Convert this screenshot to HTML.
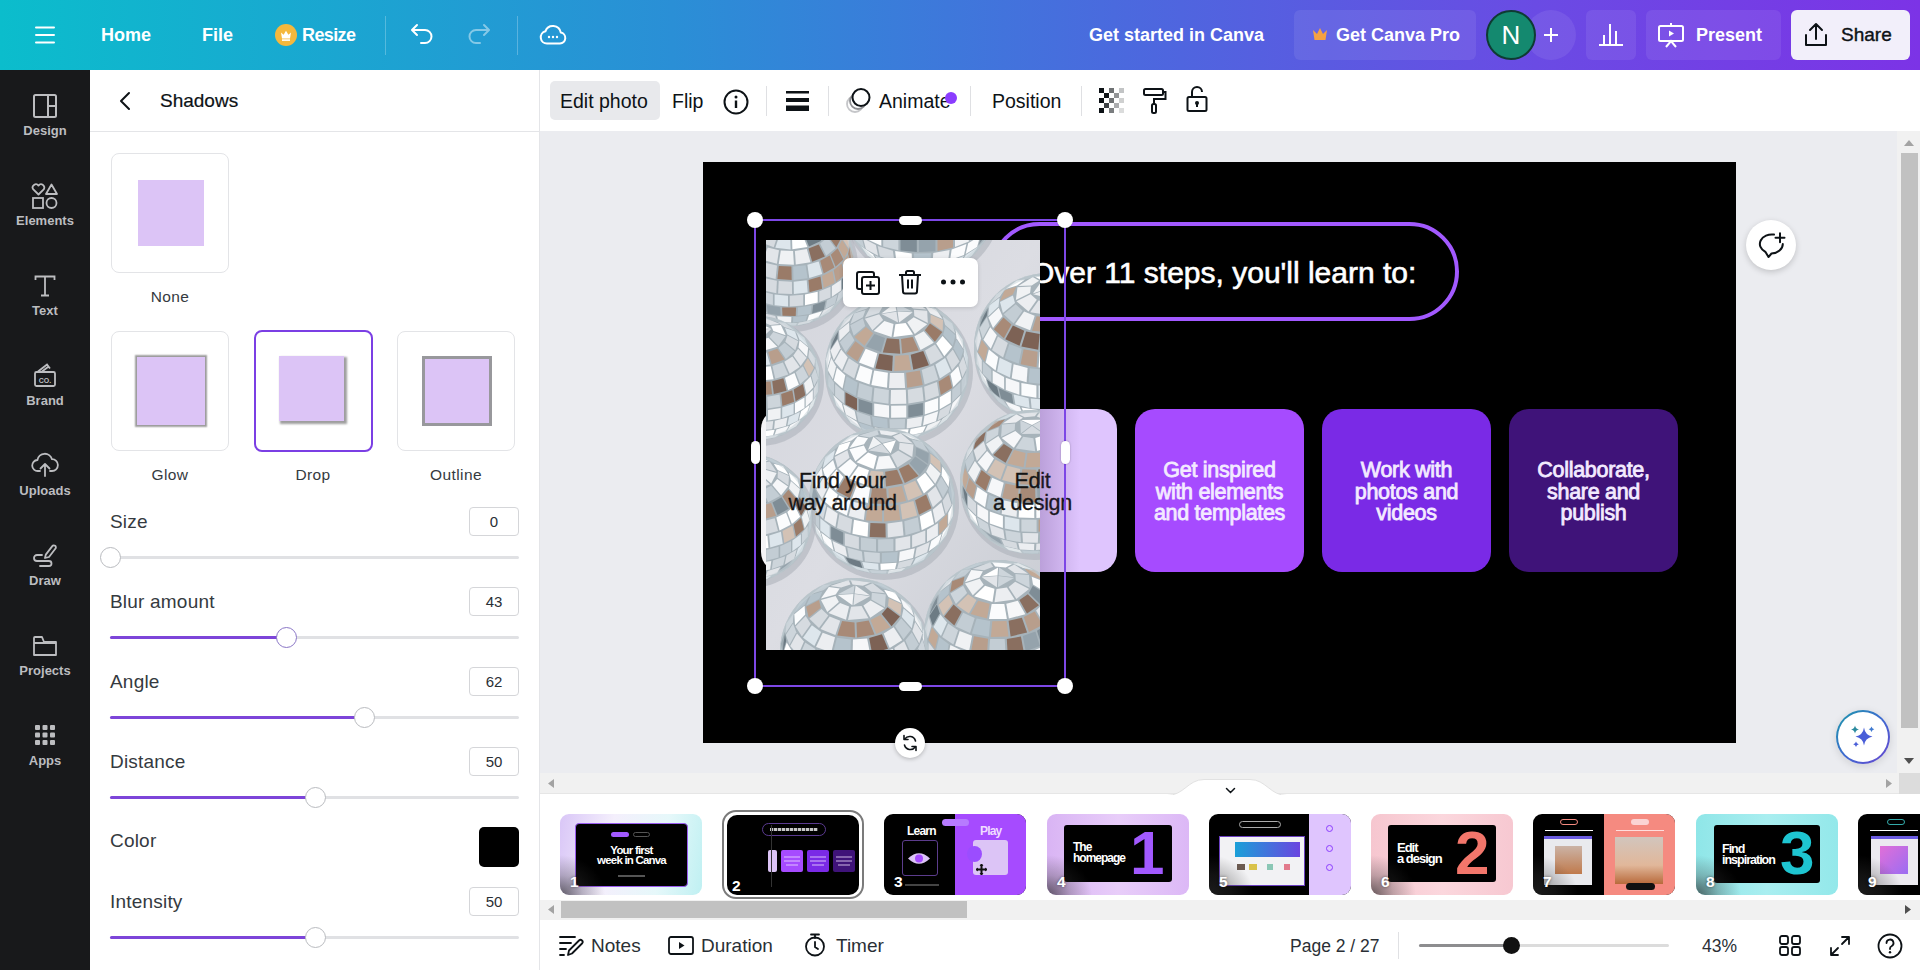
<!DOCTYPE html>
<html><head><meta charset="utf-8">
<style>
*{box-sizing:border-box;margin:0;padding:0}
html,body{width:1920px;height:970px;overflow:hidden;background:#fff;font-family:"Liberation Sans",sans-serif;color:#0d1216}
.abs{position:absolute}
#top{position:absolute;left:0;top:0;width:1920px;height:70px;background:linear-gradient(90deg,#0bbdcc 0%,#2a8fd6 35%,#4a6ade 58%,#6a4be4 80%,#7c33e6 100%)}
.tw{position:absolute;color:#fff;font-weight:bold;font-size:18px;top:25px}
#side{position:absolute;left:0;top:70px;width:90px;height:900px;background:#18191b}
.si{position:absolute;left:0;width:90px;text-align:center;color:#bcbdc0;font-size:13px;font-weight:bold}
#panel{position:absolute;left:90px;top:70px;width:450px;height:900px;background:#fff;border-right:1px solid #e4e5e8}
#tool{position:absolute;left:540px;top:70px;width:1380px;height:62px;background:#fff;border-bottom:1px solid #e2e3e6}
#canvas{position:absolute;left:540px;top:131px;width:1380px;height:642px;background:#ebecf0}
#slide{position:absolute;left:703px;top:162px;width:1033px;height:581px;background:#000;overflow:hidden}
#strip{position:absolute;left:540px;top:773px;width:1380px;height:147px;background:#fff}
#bottom{position:absolute;left:540px;top:920px;width:1380px;height:50px;background:#fff}
.bt{position:absolute;top:15px;font-size:19px;color:#2a2f35}

.card{position:absolute;width:118px;height:120px;border:1px solid #e3e4e7;border-radius:8px;background:#fff}
.card .sq{position:absolute;left:26px;top:26px;width:66px;height:66px;background:#dcc4f6}
.clab{position:absolute;width:118px;text-align:center;font-size:15.5px;letter-spacing:0.4px;color:#353a40}
.lab{position:absolute;left:20px;font-size:19px;color:#353a40;letter-spacing:0.2px}
.inp{position:absolute;left:379px;width:50px;height:29px;border:1px solid #d5d6d9;border-radius:4px;font-size:15px;color:#2a2f35;text-align:center;line-height:27px}
.track{position:absolute;left:20px;width:409px;height:3px;background:#e0e1e4;border-radius:2px}
.fill{position:absolute;left:0;top:0;height:3px;background:#7d45d9;border-radius:2px}
.thumb{position:absolute;top:-9px;width:21px;height:21px;border-radius:50%;background:#fff;border:1px solid #b9bbbf;margin-left:-10px}
.ctext{position:absolute;top:247px;height:163px;width:169px;display:flex;align-items:center;justify-content:center;text-align:center;color:#f3eaff;font-size:21.5px;line-height:21.7px;-webkit-text-stroke:0.8px currentColor;letter-spacing:-0.3px;padding-top:4px}
.hd{position:absolute;width:16px;height:16px;border-radius:50%;background:#fff;box-shadow:0 0 2px rgba(0,0,0,.3)}
.hh{position:absolute;width:23px;height:9px;border-radius:5px;background:#fff;box-shadow:0 0 2px rgba(0,0,0,.3)}
.hv{position:absolute;width:9px;height:23px;border-radius:5px;background:#fff;box-shadow:0 0 2px rgba(0,0,0,.3)}
.th{position:absolute;top:814px;width:142px;height:81px;border-radius:9px;overflow:hidden}
.tn{position:absolute;left:10px;bottom:6px;color:#fff;font-weight:bold;font-size:15.5px;line-height:15px;text-shadow:0 0 3px rgba(0,0,0,.5)}
.tov{position:absolute;left:0;top:0;width:100%;height:100%;background:radial-gradient(ellipse 45px 40px at 0% 100%,rgba(40,40,40,.7),rgba(60,60,60,.3) 50%,rgba(0,0,0,0) 100%)}
</style></head><body>
<div id="top">
<svg class="abs" style="left:35px;top:25px" width="20" height="20" viewBox="0 0 20 20"><path d="M1 2.5h18M1 10h18M1 17.5h18" stroke="#fff" stroke-width="2" stroke-linecap="round"/></svg>
<div class="tw" style="left:101px">Home</div>
<div class="tw" style="left:202px">File</div>
<svg class="abs" style="left:275px;top:24px" width="22" height="22" viewBox="0 0 22 22"><circle cx="11" cy="11" r="11" fill="#f5b83d"/><path d="M6 8.5l2.6 2.2L11 6.8l2.4 3.9L16 8.5l-1 6H7z" fill="#fff"/><rect x="7" y="15.3" width="8" height="1.6" fill="#fff"/></svg>
<div class="tw" style="left:302px;letter-spacing:-0.6px">Resize</div>
<div class="abs" style="left:385px;top:16px;width:1px;height:39px;background:rgba(255,255,255,.25)"></div>
<svg class="abs" style="left:409px;top:23px" width="26" height="22" viewBox="0 0 26 22"><path d="M8 2L3 7l5 5M3.5 7H16a6.5 6.5 0 0 1 0 13h-4" fill="none" stroke="#fff" stroke-width="2" stroke-linecap="round" stroke-linejoin="round"/></svg>
<svg class="abs" style="left:466px;top:23px" width="26" height="22" viewBox="0 0 26 22"><path d="M18 2l5 5-5 5M22.5 7H10a6.5 6.5 0 0 0 0 13h4" fill="none" stroke="rgba(255,255,255,.45)" stroke-width="2" stroke-linecap="round" stroke-linejoin="round"/></svg>
<div class="abs" style="left:517px;top:16px;width:1px;height:39px;background:rgba(255,255,255,.25)"></div>
<svg class="abs" style="left:539px;top:23px" width="28" height="22" viewBox="0 0 28 22"><path d="M8 20.5h13a5.5 5.5 0 0 0 .8-10.9A8 8 0 0 0 6.4 8.3 6.2 6.2 0 0 0 8 20.5z" fill="none" stroke="#fff" stroke-width="2" stroke-linejoin="round"/><circle cx="10" cy="14" r="1.2" fill="#fff"/><circle cx="14" cy="14" r="1.2" fill="#fff"/><circle cx="18" cy="14" r="1.2" fill="#fff"/></svg>
<div class="tw" style="left:1089px;top:25px">Get started in Canva</div>
<div class="abs" style="left:1294px;top:10px;width:182px;height:50px;border-radius:6px;background:rgba(255,255,255,.08)"></div>
<svg class="abs" style="left:1312px;top:27px" width="16" height="15" viewBox="0 0 16 15"><path d="M1 3l4 4 3-6 3 6 4-4-1.5 10h-11z" fill="#f5a142"/></svg>
<div class="tw" style="left:1336px">Get Canva Pro</div>
<div class="abs" style="left:1526px;top:10px;width:50px;height:50px;border-radius:50%;background:rgba(255,255,255,.08)"></div>
<div class="abs" style="left:1486px;top:10px;width:50px;height:50px;border-radius:50%;background:#14896f;border:2px solid #0e3b33;color:#fff;font-size:26px;text-align:center;line-height:46px">N</div>
<svg class="abs" style="left:1543px;top:27px" width="16" height="16" viewBox="0 0 16 16"><path d="M8 1v14M1 8h14" stroke="#fff" stroke-width="2"/></svg>
<div class="abs" style="left:1586px;top:10px;width:50px;height:50px;border-radius:6px;background:rgba(255,255,255,.08)"></div>
<svg class="abs" style="left:1598px;top:22px" width="26" height="24" viewBox="0 0 26 24"><path d="M1 23h24M6 22V13M12 22V2M18 22V9" stroke="#fff" stroke-width="2"/></svg>
<div class="abs" style="left:1646px;top:10px;width:135px;height:50px;border-radius:6px;background:rgba(255,255,255,.08)"></div>
<svg class="abs" style="left:1657px;top:22px" width="28" height="26" viewBox="0 0 28 26"><rect x="2" y="4" width="24" height="15" rx="1.5" fill="none" stroke="#fff" stroke-width="2"/><path d="M14 1v3M9 25l5-6 5 6" fill="none" stroke="#fff" stroke-width="2"/><path d="M12 8.5v6l5-3z" fill="#fff"/></svg>
<div class="tw" style="left:1696px">Present</div>
<div class="abs" style="left:1791px;top:10px;width:119px;height:50px;border-radius:6px;background:#f2effa"></div>
<svg class="abs" style="left:1804px;top:22px" width="24" height="25" viewBox="0 0 24 25"><path d="M2 13v10h20V13M12 17V2M6 8l6-6 6 6" fill="none" stroke="#0d1216" stroke-width="2" stroke-linecap="round" stroke-linejoin="round"/></svg>
<div class="tw" style="left:1841px;color:#0d1216;font-weight:normal;font-size:19px;-webkit-text-stroke:0.4px #0d1216;top:24px">Share</div>
</div>
<div id="side">
<svg class="abs" style="left:33px;top:24px" width="24" height="24" viewBox="0 0 24 24"><rect x="1" y="1" width="22" height="22" rx="1.5" fill="none" stroke="#bcbdc0" stroke-width="2"/><path d="M15 1v22M15 12h8" stroke="#bcbdc0" stroke-width="2"/></svg>
<div class="si" style="top:53px">Design</div>
<svg class="abs" style="left:31px;top:113px" width="28" height="26" viewBox="0 0 28 26"><path d="M7.5 11.5L2.3 6.4A3 3 0 0 1 7.5 2.6a3 3 0 0 1 5.2 3.8z" fill="none" stroke="#bcbdc0" stroke-width="1.8" stroke-linejoin="round"/><path d="M20.5 1.5l5.5 9.5H15z" fill="none" stroke="#bcbdc0" stroke-width="1.8" stroke-linejoin="round"/><rect x="2" y="15" width="10" height="10" fill="none" stroke="#bcbdc0" stroke-width="1.8"/><circle cx="20.5" cy="20" r="5" fill="none" stroke="#bcbdc0" stroke-width="1.8"/></svg>
<div class="si" style="top:143px">Elements</div>
<svg class="abs" style="left:34px;top:205px" width="22" height="22" viewBox="0 0 22 22"><path d="M1.5 5V1.5h19V5M11 1.5v19M7 20.5h8" fill="none" stroke="#bcbdc0" stroke-width="1.8"/></svg>
<div class="si" style="top:233px">Text</div>
<svg class="abs" style="left:33px;top:292px" width="24" height="26" viewBox="0 0 24 26"><rect x="2" y="10" width="20" height="14" rx="1.5" fill="none" stroke="#bcbdc0" stroke-width="1.8"/><path d="M5 9.5l9-7 3 4M9 9.5l6-4.5" fill="none" stroke="#bcbdc0" stroke-width="1.8"/><text x="12" y="20.5" font-size="7" font-weight="bold" text-anchor="middle" fill="#bcbdc0" font-family="Liberation Sans">CO.</text></svg>
<div class="si" style="top:323px">Brand</div>
<svg class="abs" style="left:31px;top:381px" width="28" height="26" viewBox="0 0 28 26"><path d="M9 20H7a5.5 5.5 0 0 1-.6-11A7.5 7.5 0 0 1 21 8.2 5.9 5.9 0 0 1 21 20h-2" fill="none" stroke="#bcbdc0" stroke-width="1.8" stroke-linecap="round"/><path d="M14 25V13M9.5 17.5L14 13l4.5 4.5" fill="none" stroke="#bcbdc0" stroke-width="1.8" stroke-linecap="round" stroke-linejoin="round"/></svg>
<div class="si" style="top:413px">Uploads</div>
<svg class="abs" style="left:32px;top:473px" width="26" height="24" viewBox="0 0 26 24"><path d="M17 14l6.5-8.5a2 2 0 0 0-3.2-2.4L13.8 11.6 13 15z" fill="none" stroke="#bcbdc0" stroke-width="1.8" stroke-linejoin="round"/><path d="M10 12H5a3 3 0 0 0 0 6h12a2.5 2.5 0 0 1 0 5H8" fill="none" stroke="#bcbdc0" stroke-width="1.8" stroke-linecap="round"/></svg>
<div class="si" style="top:503px">Draw</div>
<svg class="abs" style="left:32px;top:565px" width="26" height="22" viewBox="0 0 26 22"><path d="M2 4.5V20h22V7H12L10 2H3a1 1 0 0 0-1 1zM2 8h22" fill="none" stroke="#bcbdc0" stroke-width="1.8" stroke-linejoin="round"/></svg>
<div class="si" style="top:593px">Projects</div>
<svg class="abs" style="left:35px;top:655px" width="20" height="20" viewBox="0 0 20 20" fill="#bcbdc0"><rect x="0" y="0" width="5" height="5" rx="1"/><rect x="7.5" y="0" width="5" height="5" rx="1"/><rect x="15" y="0" width="5" height="5" rx="1"/><rect x="0" y="7.5" width="5" height="5" rx="1"/><rect x="7.5" y="7.5" width="5" height="5" rx="1"/><rect x="15" y="7.5" width="5" height="5" rx="1"/><rect x="0" y="15" width="5" height="5" rx="1"/><rect x="7.5" y="15" width="5" height="5" rx="1"/><rect x="15" y="15" width="5" height="5" rx="1"/></svg>
<div class="si" style="top:683px">Apps</div>
</div>
<div id="panel">
<svg class="abs" style="left:28px;top:21px" width="14" height="20" viewBox="0 0 14 20"><path d="M11 2L3 10l8 8" fill="none" stroke="#0d1216" stroke-width="2" stroke-linecap="round" stroke-linejoin="round"/></svg>
<div class="abs" style="left:70px;top:20px;font-size:19px;color:#0d1216;-webkit-text-stroke:0.2px #0d1216">Shadows</div>
<div class="abs" style="left:0;top:61px;width:449px;height:1px;background:#e4e5e8"></div>
<div class="card" style="left:21px;top:83px"><div class="sq" style="top:26px"></div></div>
<div class="clab" style="left:21px;top:218px">None</div>
<div class="card" style="left:21px;top:261px"><div class="sq" style="left:25px;top:25px;width:68px;height:68px;box-shadow:0 0 1.5px 2px rgba(0,0,0,.38)"></div></div>
<div class="clab" style="left:21px;top:396px">Glow</div>
<div class="card" style="left:164px;top:260px;border:2.5px solid #7b3fe4;width:119px;height:122px"><div class="sq" style="left:22.5px;top:23.5px;width:65px;height:65px;box-shadow:2px 2px 2px 1px rgba(0,0,0,.38)"></div></div>
<div class="clab" style="left:164px;top:396px">Drop</div>
<div class="card" style="left:307px;top:261px"><div class="sq" style="left:24px;top:24px;width:70px;height:70px;border:3px solid #98989c"></div></div>
<div class="clab" style="left:307px;top:396px">Outline</div>

<div class="lab" style="top:441px">Size</div>
<div class="inp" style="top:437px">0</div>
<div class="track" style="top:486px"><div class="fill" style="width:0"></div><div class="thumb" style="left:0"></div></div>

<div class="lab" style="top:521px">Blur amount</div>
<div class="inp" style="top:517px">43</div>
<div class="track" style="top:566px"><div class="fill" style="width:176px"></div><div class="thumb" style="left:176px;border-color:#8a76c6;border-width:1.5px"></div></div>

<div class="lab" style="top:601px">Angle</div>
<div class="inp" style="top:597px">62</div>
<div class="track" style="top:646px"><div class="fill" style="width:254px"></div><div class="thumb" style="left:254px"></div></div>

<div class="lab" style="top:681px">Distance</div>
<div class="inp" style="top:677px">50</div>
<div class="track" style="top:726px"><div class="fill" style="width:205px"></div><div class="thumb" style="left:205px"></div></div>

<div class="lab" style="top:760px">Color</div>
<div class="abs" style="left:389px;top:757px;width:40px;height:40px;border-radius:5px;background:#000"></div>

<div class="lab" style="top:821px">Intensity</div>
<div class="inp" style="top:817px">50</div>
<div class="track" style="top:866px"><div class="fill" style="width:205px"></div><div class="thumb" style="left:205px"></div></div>
</div>
<div id="tool">
<div class="abs" style="left:10px;top:11px;width:110px;height:39px;border-radius:5px;background:#e8e9ec"></div>
<div class="abs" style="left:20px;top:20px;font-size:19.5px;color:#0d1216">Edit photo</div>
<div class="abs" style="left:132px;top:20px;font-size:19.5px;color:#0d1216">Flip</div>
<svg class="abs" style="left:183px;top:19px" width="26" height="26" viewBox="0 0 26 26"><circle cx="13" cy="13" r="11.5" fill="none" stroke="#0d1216" stroke-width="2"/><circle cx="13" cy="8" r="1.5" fill="#0d1216"/><path d="M13 11.5v7.5" stroke="#0d1216" stroke-width="2.4"/></svg>
<div class="abs" style="left:226px;top:16px;width:1px;height:30px;background:#dfe0e3"></div>
<svg class="abs" style="left:246px;top:20px" width="24" height="22" viewBox="0 0 24 22"><rect x="0" y="1" width="23" height="2.5" fill="#0d1216"/><rect x="0" y="8" width="23" height="4" fill="#0d1216"/><rect x="0" y="15.5" width="23" height="5.5" fill="#0d1216"/></svg>
<div class="abs" style="left:288px;top:16px;width:1px;height:30px;background:#dfe0e3"></div>
<svg class="abs" style="left:305px;top:17px" width="28" height="27" viewBox="0 0 28 27"><circle cx="10" cy="17" r="8" fill="none" stroke="#c5c6c9" stroke-width="1.8"/><circle cx="13" cy="14" r="8" fill="#fff" stroke="#8e8f93" stroke-width="1.8"/><circle cx="16" cy="10.5" r="8.5" fill="#fff" stroke="#0d1216" stroke-width="2"/></svg>
<div class="abs" style="left:339px;top:20px;font-size:19.5px;color:#0d1216">Animate</div>
<div class="abs" style="left:405px;top:22px;width:12px;height:12px;border-radius:50%;background:#8b3dff"></div>
<div class="abs" style="left:430px;top:16px;width:1px;height:30px;background:#dfe0e3"></div>
<div class="abs" style="left:452px;top:20px;font-size:19.5px;color:#0d1216">Position</div>
<div class="abs" style="left:541px;top:16px;width:1px;height:30px;background:#dfe0e3"></div>
<svg class="abs" style="left:559px;top:18px" width="26" height="26" viewBox="0 0 26 26"><g fill="#0d1216"><rect x="0" y="0" width="5" height="5"/><rect x="10" y="0" width="5" height="5" opacity=".6"/><rect x="20" y="0" width="5" height="5" opacity=".25"/><rect x="5" y="5" width="5" height="5"/><rect x="15" y="5" width="5" height="5" opacity=".45"/><rect x="0" y="10" width="5" height="5"/><rect x="10" y="10" width="5" height="5" opacity=".6"/><rect x="20" y="10" width="5" height="5" opacity=".2"/><rect x="5" y="15" width="5" height="5" opacity=".8"/><rect x="15" y="15" width="5" height="5" opacity=".35"/><rect x="0" y="20" width="5" height="5"/><rect x="10" y="20" width="5" height="5" opacity=".55"/><rect x="20" y="20" width="5" height="5" opacity=".15"/></g></svg>
<svg class="abs" style="left:602px;top:17px" width="26" height="28" viewBox="0 0 26 28"><rect x="2" y="2" width="19" height="6" rx="1.5" fill="none" stroke="#0d1216" stroke-width="2"/><path d="M21 5h2.5v7H12v5" fill="none" stroke="#0d1216" stroke-width="2"/><rect x="10" y="17" width="4" height="9" rx="1.5" fill="none" stroke="#0d1216" stroke-width="2"/></svg>
<svg class="abs" style="left:645px;top:15px" width="24" height="28" viewBox="0 0 24 28"><path d="M7 12V7a5 5 0 0 1 10 0" fill="none" stroke="#0d1216" stroke-width="2"/><rect x="2.5" y="12" width="19" height="14" rx="1.5" fill="none" stroke="#0d1216" stroke-width="2"/><circle cx="12" cy="18" r="2" fill="#0d1216"/><path d="M12 18v4" stroke="#0d1216" stroke-width="2"/></svg>
</div>
<div id="canvas">
<div class="abs" style="left:1357px;top:0;width:23px;height:642px;background:#f1f1f1"></div>
<div class="abs" style="left:1361px;top:22px;width:17px;height:575px;background:#c1c1c1"></div>
<svg class="abs" style="left:1363px;top:8px" width="12" height="8" viewBox="0 0 12 8"><path d="M1 7l5-6 5 6z" fill="#a3a3a3"/></svg>
<svg class="abs" style="left:1363px;top:626px" width="12" height="8" viewBox="0 0 12 8"><path d="M1 1l5 6 5-6z" fill="#505050"/></svg>
<div class="abs" style="left:1206px;top:89px;width:50px;height:50px;border-radius:50%;background:#fff;box-shadow:0 2px 6px rgba(0,0,0,.18)"></div>
<svg class="abs" style="left:1217px;top:100px" width="30" height="28" viewBox="0 0 30 28"><path d="M17 3.6A12 9.5 0 0 0 8.5 21L11.5 26 14.5 22.5A12 9.5 0 0 0 25.8 13" fill="none" stroke="#0d1216" stroke-width="2" stroke-linejoin="round" stroke-linecap="round"/><path d="M23 2.3v9M18.5 6.8h9" stroke="#0d1216" stroke-width="2" stroke-linecap="round"/></svg>
<div class="abs" style="left:1296px;top:579px;width:54px;height:54px;border-radius:50%;background:linear-gradient(135deg,#1b9aa8,#3d6ad0 50%,#6a45d0);box-shadow:0 2px 8px rgba(0,0,0,.12)"></div>
<div class="abs" style="left:1298px;top:581px;width:50px;height:50px;border-radius:50%;background:#fff"></div>
<svg class="abs" style="left:1307px;top:590px" width="32" height="32" viewBox="0 0 32 32"><path d="M17 6.5Q18 14 25.5 15.5 18 17 17 24.5 16 17 8.5 15.5 16 14 17 6.5z" fill="#4a5ed8"/><path d="M8 4.5Q8.6 8 12 8.5 8.6 9 8 12.5 7.4 9 4 8.5 7.4 8 8 4.5z" fill="#2a8a9e"/><path d="M24.5 5.5Q25 7.8 27.3 8.3 25 8.8 24.5 11 24 8.8 21.7 8.3 24 7.8 24.5 5.5z" fill="#3f7ad0"/><path d="M9 20.5Q9.5 22.8 11.8 23.3 9.5 23.8 9 26 8.5 23.8 6.2 23.3 8.5 22.8 9 20.5z" fill="#4a5ed8"/></svg>
</div>
<div id="slide">
<div class="abs" style="left:287px;top:60px;width:469px;height:99px;border:4px solid #a259ff;border-radius:50px"></div>
<div class="abs" style="left:328px;top:94px;font-size:30px;color:#fff;letter-spacing:0px;-webkit-text-stroke:0.6px #fff;white-space:nowrap">Over 11 steps, you'll learn to:</div>
<div class="abs" style="left:58px;top:247px;width:169px;height:163px;border-radius:20px;background:#f4f4f6"></div>
<div class="abs" style="left:245px;top:247px;width:169px;height:163px;border-radius:20px;background:#dfc5fe"></div>
<div class="abs" style="left:432px;top:247px;width:169px;height:163px;border-radius:20px;background:#a64bff"></div>
<div class="abs" style="left:619px;top:247px;width:169px;height:163px;border-radius:20px;background:#7a2ae6"></div>
<div class="abs" style="left:806px;top:247px;width:169px;height:163px;border-radius:20px;background:#3f1379"></div>
<div id="photo" class="abs" style="left:63px;top:78px;width:274px;height:410px;background:#d4d6db;overflow:hidden"><!--BALLS--><svg width="274" height="410" viewBox="0 0 274 410" style="position:absolute;left:0;top:0;filter:blur(0.5px)"><defs><linearGradient id="bg" x1="0" y1="0" x2="1" y2="1"><stop offset="0" stop-color="#d3d5dc"/><stop offset=".5" stop-color="#dcdde3"/><stop offset="1" stop-color="#c9ccd3"/></linearGradient></defs><rect width="274" height="410" fill="url(#bg)"/><circle cx="26" cy="26" r="66" fill="#aeb2ba" opacity=".6"/><circle cx="24" cy="22" r="64" fill="#a7b3ba"/><path d="M31.5,85.2 L43.2,82.8 L47.4,79.7 L32.9,82.7z" fill="#e2e5e9"/><path d="M4.0,82.6 L15.5,85.1 L14.0,82.6 L-0.4,79.4z" fill="#dde6ec"/><path d="M17.4,85.3 L29.7,85.4 L31.0,82.9 L15.8,82.8z" fill="#cdd5db"/><path d="M27.0,82.6 L39.4,81.2 L41.3,75.4 L27.2,77.0z" fill="#b5c3cc"/><path d="M41.1,80.9 L52.5,77.5 L56.0,71.3 L43.1,75.1z" fill="#fbfcfd"/><path d="M54.0,76.9 L63.5,71.7 L68.3,64.8 L57.5,70.6z" fill="#e2e5e9"/><path d="M-12.6,73.6 L-2.5,78.2 L-5.6,72.2 L-17.1,66.9z" fill="#eceef1"/><path d="M-1.0,78.8 L10.8,81.6 L9.3,75.9 L-4.0,72.7z" fill="#d6dbe0"/><path d="M12.6,81.9 L25.1,82.6 L25.4,77.0 L11.1,76.2z" fill="#f0f2f4"/><path d="M31.5,75.8 L44.4,73.9 L45.5,65.4 L31.9,67.4z" fill="#b5c3cc"/><path d="M46.1,73.5 L57.8,69.7 L59.6,60.9 L47.2,65.0z" fill="#7f8d96"/><path d="M59.3,69.0 L69.0,63.6 L71.5,54.5 L61.1,60.3z" fill="#c3cdd4"/><path d="M70.2,62.7 L77.4,55.9 L80.4,46.4 L72.7,53.6z" fill="#cdd5db"/><path d="M-30.2,54.9 L-23.3,61.8 L-25.9,52.7 L-33.2,45.3z" fill="#cdd5db"/><path d="M-22.2,62.7 L-12.7,68.4 L-14.6,59.6 L-24.7,53.6z" fill="#eceef1"/><path d="M-11.2,69.0 L0.3,73.1 L-1.0,64.5 L-13.2,60.3z" fill="#ffffff"/><path d="M2.0,73.5 L14.7,75.6 L14.2,67.2 L0.7,65.0z" fill="#95a3ac"/><path d="M16.5,75.8 L29.7,75.9 L30.1,67.5 L16.1,67.4z" fill="#9a7b68"/><path d="M39.0,65.3 L51.7,62.5 L51.7,51.8 L39.0,54.6z" fill="#ffffff"/><path d="M53.3,62.0 L64.5,57.4 L64.5,46.7 L53.3,51.3z" fill="#d6dbe0"/><path d="M65.9,56.7 L75.0,50.6 L75.0,39.9 L65.9,46.0z" fill="#eceef1"/><path d="M76.1,49.6 L82.6,42.4 L82.6,31.7 L76.1,38.9z" fill="#6d7b84"/><path d="M83.2,41.3 L86.7,33.3 L86.7,22.6 L83.2,30.6z" fill="#d6dbe0"/><path d="M-39.0,31.9 L-36.0,40.0 L-36.0,29.3 L-39.0,21.2z" fill="#6d7b84"/><path d="M-35.4,41.1 L-29.3,48.5 L-29.3,37.8 L-35.4,30.4z" fill="#c3cdd4"/><path d="M-28.3,49.4 L-19.6,55.7 L-19.6,45.0 L-28.3,38.7z" fill="#e2e5e9"/><path d="M-18.2,56.5 L-7.3,61.3 L-7.3,50.6 L-18.2,45.8z" fill="#ffffff"/><path d="M-5.7,61.9 L6.9,64.9 L6.9,54.2 L-5.7,51.2z" fill="#cdd5db"/><path d="M8.6,65.2 L22.0,66.4 L22.0,55.7 L8.6,54.5z" fill="#dde6ec"/><path d="M23.8,66.4 L37.2,65.5 L37.2,54.8 L23.8,55.7z" fill="#d6dbe0"/><path d="M27.9,54.1 L41.7,52.6 L40.7,40.3 L27.7,41.7z" fill="#dde6ec"/><path d="M43.5,52.2 L56.2,48.7 L54.5,36.6 L42.5,39.9z" fill="#9a7b68"/><path d="M57.8,48.1 L68.7,42.7 L66.4,30.9 L56.1,36.0z" fill="#c2a996"/><path d="M70.0,41.9 L78.4,35.0 L75.6,23.6 L67.7,30.1z" fill="#b89e8c"/><path d="M79.3,34.0 L84.7,26.0 L81.6,15.1 L76.5,22.6z" fill="#c2a996"/><path d="M85.2,24.9 L87.2,16.4 L83.9,6.0 L82.1,14.0z" fill="#a88a77"/><path d="M-38.7,20.0 L-35.4,28.4 L-32.4,17.3 L-35.5,9.4z" fill="#d6dbe0"/><path d="M-34.8,29.5 L-28.2,37.1 L-25.6,25.6 L-31.8,18.4z" fill="#dde6ec"/><path d="M-27.2,38.0 L-17.7,44.4 L-15.6,32.5 L-24.5,26.5z" fill="#fbfcfd"/><path d="M-16.3,45.2 L-4.6,49.9 L-3.2,37.7 L-14.2,33.3z" fill="#ffffff"/><path d="M-3.0,50.4 L10.3,53.2 L10.9,40.8 L-1.5,38.2z" fill="#d6dbe0"/><path d="M12.1,53.4 L26.1,54.1 L25.9,41.7 L12.7,41.1z" fill="#d6dbe0"/><path d="M27.5,39.9 L41.6,38.3 L39.6,25.2 L27.2,26.6z" fill="#b5c3cc"/><path d="M43.3,38.0 L56.2,34.1 L52.7,21.4 L41.4,24.8z" fill="#dde6ec"/><path d="M57.7,33.5 L68.4,27.6 L63.7,15.6 L54.2,20.8z" fill="#a88a77"/><path d="M69.6,26.8 L77.4,19.4 L71.7,8.2 L64.8,14.8z" fill="#a88a77"/><path d="M78.2,18.3 L82.4,9.9 L76.1,-0.2 L72.4,7.2z" fill="#c2a996"/><path d="M82.7,8.8 L83.0,-0.0 L76.7,-9.1 L76.4,-1.3z" fill="#d3c2b5"/><path d="M-32.9,-6.7 L-35.2,2.0 L-28.9,-7.4 L-26.9,-15.0z" fill="#dde6ec"/><path d="M-35.3,3.1 L-33.7,11.9 L-27.6,1.5 L-29.0,-6.3z" fill="#eceef1"/><path d="M-33.2,13.0 L-27.9,21.2 L-22.4,9.8 L-27.1,2.6z" fill="#b5c3cc"/><path d="M-27.0,22.1 L-18.2,29.1 L-13.8,16.9 L-21.5,10.7z" fill="#cdd5db"/><path d="M-16.9,29.9 L-5.4,35.2 L-2.3,22.3 L-12.5,17.7z" fill="#f6f7f9"/><path d="M-3.8,35.7 L9.6,38.9 L11.0,25.6 L-0.7,22.8z" fill="#d6dbe0"/><path d="M11.4,39.1 L25.7,40.0 L25.4,26.6 L12.8,25.9z" fill="#9a7b68"/><path d="M29.8,24.6 L44.5,22.2 L40.8,9.1 L28.9,11.0z" fill="#eceef1"/><path d="M46.2,21.7 L58.9,16.5 L52.7,4.4 L42.5,8.6z" fill="#8a6f60"/><path d="M60.2,15.7 L69.5,8.2 L61.5,-2.4 L54.1,3.6z" fill="#c3cdd4"/><path d="M70.3,7.2 L75.1,-1.7 L66.2,-10.6 L62.4,-3.4z" fill="#9a7b68"/><path d="M75.4,-2.8 L75.3,-12.2 L66.4,-19.3 L66.5,-11.7z" fill="#a88a77"/><path d="M74.9,-13.3 L69.8,-22.2 L62.0,-27.5 L66.1,-20.4z" fill="#cdd5db"/><path d="M-25.6,-16.7 L-27.9,-7.4 L-18.9,-15.5 L-17.0,-23.0z" fill="#95a3ac"/><path d="M-27.9,-6.3 L-25.2,3.0 L-16.7,-6.9 L-18.9,-14.4z" fill="#6d7b84"/><path d="M-24.6,4.0 L-17.2,12.3 L-10.1,0.8 L-16.1,-5.8z" fill="#eceef1"/><path d="M-16.0,13.1 L-4.7,19.4 L0.1,6.8 L-9.0,1.7z" fill="#f6f7f9"/><path d="M-3.1,20.0 L10.9,23.7 L13.0,10.3 L1.7,7.4z" fill="#e2e5e9"/><path d="M12.7,24.0 L27.9,24.7 L27.1,11.1 L14.8,10.6z" fill="#f0f2f4"/><path d="M26.4,9.3 L41.4,7.0 L36.5,-5.2 L26.0,-3.6z" fill="#ffffff"/><path d="M43.0,6.5 L55.2,0.7 L46.7,-9.8 L38.1,-5.7z" fill="#6d7b84"/><path d="M56.4,-0.2 L63.6,-8.6 L52.9,-16.6 L47.8,-10.7z" fill="#b89e8c"/><path d="M64.1,-9.7 L65.2,-19.2 L54.1,-24.3 L53.4,-17.6z" fill="#8a6f60"/><path d="M65.0,-20.3 L59.6,-29.3 L50.2,-31.7 L53.9,-25.4z" fill="#eceef1"/><path d="M58.7,-30.2 L47.9,-37.0 L41.7,-37.4 L49.2,-32.6z" fill="#cdd5db"/><path d="M-2.3,-35.9 L-12.2,-28.6 L-2.4,-31.5 L4.6,-36.6z" fill="#ffffff"/><path d="M-13.1,-27.7 L-17.3,-18.5 L-6.2,-24.1 L-3.2,-30.5z" fill="#fbfcfd"/><path d="M-17.5,-17.4 L-15.3,-7.9 L-4.8,-16.4 L-6.3,-23.0z" fill="#eceef1"/><path d="M-14.7,-6.9 L-6.4,1.2 L1.6,-9.7 L-4.2,-15.3z" fill="#cdd5db"/><path d="M-5.2,2.0 L7.7,7.3 L11.8,-5.1 L2.8,-8.9z" fill="#d6dbe0"/><path d="M9.3,7.7 L24.6,9.4 L24.2,-3.6 L13.5,-4.7z" fill="#dde6ec"/><path d="M37.5,-7.4 L49.8,-15.4 L38.2,-22.3 L31.8,-18.2z" fill="#f6f7f9"/><path d="M50.5,-16.4 L51.6,-27.4 L39.5,-29.0 L38.9,-23.3z" fill="#e2e5e9"/><path d="M51.2,-28.4 L40.5,-37.3 L33.5,-34.5 L39.0,-30.0z" fill="#d6dbe0"/><path d="M39.1,-37.9 L21.7,-40.4 L23.1,-36.5 L32.1,-35.1z" fill="#f0f2f4"/><path d="M20.0,-40.3 L3.9,-35.4 L13.1,-33.8 L21.4,-36.4z" fill="#fbfcfd"/><path d="M2.7,-34.7 L-4.4,-24.6 L8.2,-27.9 L11.9,-33.1z" fill="#d6dbe0"/><path d="M-4.6,-23.5 L0.5,-12.9 L10.7,-21.3 L8.1,-26.8z" fill="#cdd5db"/><path d="M1.5,-12.0 L16.4,-5.9 L19.4,-17.3 L11.7,-20.5z" fill="#ffffff"/><path d="M18.1,-5.7 L35.9,-6.9 L30.3,-17.7 L21.1,-17.1z" fill="#d6dbe0"/><path d="M37.8,-25.7 L27.1,-35.4 L24.5,-28.6 L24.5,-28.6z" fill="#f0f2f4"/><path d="M26.2,-35.5 L10.4,-28.9 L23.6,-28.7 L23.6,-28.7z" fill="#e2e5e9"/><path d="M10.2,-28.4 L20.9,-18.7 L23.5,-28.1 L23.5,-28.1z" fill="#f6f7f9"/><path d="M21.8,-18.6 L37.6,-25.2 L24.4,-28.0 L24.4,-28.0z" fill="#cdd5db"/><circle cx="24" cy="22" r="62.5" fill="none" stroke="#c9d3d9" stroke-width="3" opacity=".55"/><circle cx="156" cy="-38" r="80" fill="#aeb2ba" opacity=".6"/><circle cx="154" cy="-42" r="78" fill="#a7b3ba"/><path d="M136.9,33.8 L151.6,35.5 L151.3,32.5 L133.1,30.3z" fill="#c3cdd4"/><path d="M153.8,35.5 L168.7,34.2 L172.0,30.9 L153.6,32.5z" fill="#dde6ec"/><path d="M163.1,31.5 L177.9,29.1 L180.9,21.9 L164.0,24.6z" fill="#95a3ac"/><path d="M180.0,28.5 L193.2,23.7 L198.0,15.9 L182.9,21.3z" fill="#dde6ec"/><path d="M195.0,22.9 L205.6,16.0 L211.8,7.3 L199.7,15.0z" fill="#dde6ec"/><path d="M101.4,15.2 L111.8,22.2 L106.8,14.3 L95.1,6.3z" fill="#fbfcfd"/><path d="M113.5,23.1 L126.5,28.1 L123.3,20.9 L108.5,15.2z" fill="#cdd5db"/><path d="M128.5,28.7 L143.3,31.3 L142.1,24.5 L125.4,21.4z" fill="#f6f7f9"/><path d="M145.5,31.5 L160.9,31.7 L161.8,24.8 L144.3,24.7z" fill="#eceef1"/><path d="M166.6,23.2 L182.1,20.5 L183.6,10.0 L167.3,13.0z" fill="#eceef1"/><path d="M184.1,19.9 L198.0,14.9 L200.4,4.1 L185.7,9.5z" fill="#fbfcfd"/><path d="M199.7,14.0 L211.1,7.0 L214.2,-4.2 L202.2,3.3z" fill="#fbfcfd"/><path d="M212.5,5.9 L220.6,-2.6 L224.3,-14.3 L215.6,-5.3z" fill="#7f8d96"/><path d="M89.5,0.0 L98.5,8.2 L95.5,-2.8 L85.9,-11.5z" fill="#c3cdd4"/><path d="M100.0,9.2 L112.1,15.8 L109.9,5.1 L97.0,-1.8z" fill="#e2e5e9"/><path d="M113.9,16.6 L128.3,21.0 L126.9,10.7 L111.7,5.9z" fill="#d6dbe0"/><path d="M130.4,21.5 L146.1,23.7 L145.7,13.4 L129.1,11.1z" fill="#ffffff"/><path d="M148.3,23.8 L164.4,23.5 L165.0,13.2 L148.0,13.5z" fill="#b5c3cc"/><path d="M171.5,10.9 L187.0,7.5 L187.0,-5.5 L171.5,-2.2z" fill="#b89e8c"/><path d="M189.0,6.9 L202.8,1.4 L202.8,-11.6 L189.0,-6.1z" fill="#f0f2f4"/><path d="M204.5,0.5 L215.7,-6.8 L215.7,-19.9 L204.5,-12.5z" fill="#d6dbe0"/><path d="M217.1,-7.9 L225.1,-16.8 L225.1,-29.8 L217.1,-21.0z" fill="#b5c3cc"/><path d="M225.9,-18.0 L230.3,-27.8 L230.3,-40.8 L225.9,-31.1z" fill="#d6dbe0"/><path d="M77.1,-30.4 L80.6,-20.5 L80.6,-33.5 L77.1,-43.4z" fill="#cdd5db"/><path d="M81.4,-19.2 L88.6,-10.1 L88.6,-23.1 L81.4,-32.2z" fill="#f0f2f4"/><path d="M89.8,-8.9 L100.4,-1.2 L100.4,-14.2 L89.8,-22.0z" fill="#f6f7f9"/><path d="M102.0,-0.3 L115.3,5.7 L115.3,-7.3 L102.0,-13.3z" fill="#fbfcfd"/><path d="M117.2,6.4 L132.4,10.2 L132.4,-2.8 L117.2,-6.7z" fill="#cdd5db"/><path d="M134.5,10.6 L150.8,12.1 L150.8,-1.0 L134.5,-2.5z" fill="#7f8d96"/><path d="M153.0,12.1 L169.4,11.2 L169.4,-1.9 L153.0,-0.9z" fill="#95a3ac"/><path d="M161.6,-3.1 L178.3,-5.3 L177.0,-20.2 L161.3,-18.2z" fill="#e2e5e9"/><path d="M180.4,-5.7 L195.7,-10.4 L193.5,-25.1 L179.1,-20.7z" fill="#c3cdd4"/><path d="M197.6,-11.2 L210.5,-18.0 L207.6,-32.3 L195.4,-25.9z" fill="#fbfcfd"/><path d="M212.0,-19.1 L221.8,-27.7 L218.2,-41.5 L209.1,-33.4z" fill="#d6dbe0"/><path d="M222.8,-28.9 L228.7,-38.8 L224.9,-52.0 L219.3,-42.7z" fill="#c3cdd4"/><path d="M229.2,-40.1 L231.0,-50.6 L227.1,-63.2 L225.4,-53.4z" fill="#c3cdd4"/><path d="M77.3,-54.5 L77.6,-44.0 L81.6,-57.0 L81.2,-66.9z" fill="#dde6ec"/><path d="M78.0,-42.6 L82.6,-32.5 L86.2,-46.1 L81.9,-55.7z" fill="#c3cdd4"/><path d="M83.4,-31.2 L92.0,-22.1 L95.1,-36.3 L87.1,-44.8z" fill="#d6dbe0"/><path d="M93.3,-21.0 L105.3,-13.5 L107.8,-28.1 L96.5,-35.2z" fill="#f6f7f9"/><path d="M107.1,-12.7 L121.7,-7.2 L123.3,-22.1 L109.5,-27.2z" fill="#7f8d96"/><path d="M123.7,-6.7 L140.1,-3.6 L140.7,-18.7 L125.3,-21.6z" fill="#dde6ec"/><path d="M142.3,-3.4 L159.4,-3.0 L159.0,-18.1 L143.0,-18.5z" fill="#a88a77"/><path d="M168.6,-21.0 L185.2,-24.5 L181.8,-40.2 L167.2,-37.2z" fill="#b89e8c"/><path d="M187.2,-25.1 L201.6,-31.1 L196.5,-46.2 L183.8,-40.8z" fill="#ffffff"/><path d="M203.3,-32.0 L214.5,-40.3 L208.0,-54.4 L198.1,-47.1z" fill="#e2e5e9"/><path d="M215.7,-41.4 L222.9,-51.2 L215.6,-64.1 L209.2,-55.5z" fill="#fbfcfd"/><path d="M223.6,-52.5 L226.2,-63.2 L218.5,-74.8 L216.2,-65.4z" fill="#ffffff"/><path d="M226.3,-64.5 L224.2,-75.2 L216.7,-85.6 L218.6,-76.2z" fill="#e2e5e9"/><path d="M82.4,-70.7 L82.1,-59.9 L89.8,-72.0 L90.0,-81.5z" fill="#f6f7f9"/><path d="M82.4,-58.6 L86.8,-48.2 L93.9,-61.5 L90.0,-70.7z" fill="#b5c3cc"/><path d="M87.7,-46.9 L96.5,-37.6 L102.6,-52.1 L94.8,-60.3z" fill="#d6dbe0"/><path d="M97.9,-36.5 L110.5,-29.1 L115.0,-44.4 L104.0,-51.0z" fill="#dde6ec"/><path d="M112.3,-28.3 L127.7,-23.2 L130.4,-39.1 L116.8,-43.6z" fill="#b89e8c"/><path d="M129.7,-22.7 L146.8,-20.3 L147.5,-36.6 L132.4,-38.7z" fill="#c3cdd4"/><path d="M149.0,-20.2 L166.5,-20.8 L165.0,-37.0 L149.7,-36.5z" fill="#95a3ac"/><path d="M163.7,-39.1 L181.5,-42.5 L176.5,-58.3 L162.2,-55.5z" fill="#9a7b68"/><path d="M183.5,-43.1 L198.5,-49.9 L190.6,-64.4 L178.6,-58.9z" fill="#c3cdd4"/><path d="M200.1,-50.9 L210.7,-60.3 L200.8,-72.9 L192.2,-65.4z" fill="#c3cdd4"/><path d="M211.7,-61.6 L216.7,-72.6 L205.8,-83.1 L201.7,-74.2z" fill="#d6dbe0"/><path d="M217.0,-73.9 L216.0,-85.4 L205.3,-93.7 L206.1,-84.5z" fill="#f0f2f4"/><path d="M215.5,-86.7 L208.5,-97.3 L199.2,-103.6 L204.8,-95.0z" fill="#f0f2f4"/><path d="M92.8,-87.6 L90.8,-76.2 L101.7,-86.3 L103.4,-95.5z" fill="#d6dbe0"/><path d="M90.9,-74.8 L94.9,-63.6 L105.1,-75.9 L101.9,-84.9z" fill="#d6dbe0"/><path d="M95.8,-62.3 L105.5,-52.6 L113.8,-66.8 L106.0,-74.6z" fill="#a88a77"/><path d="M107.0,-51.5 L121.3,-44.2 L126.8,-59.8 L115.3,-65.7z" fill="#a88a77"/><path d="M123.3,-43.5 L140.7,-39.5 L142.8,-55.9 L128.8,-59.1z" fill="#8a6f60"/><path d="M142.9,-39.2 L161.5,-38.9 L160.0,-55.4 L145.0,-55.6z" fill="#d3c2b5"/><path d="M157.7,-57.5 L176.0,-60.5 L169.8,-75.4 L157.0,-73.2z" fill="#d3c2b5"/><path d="M177.9,-61.1 L192.6,-68.4 L182.0,-81.1 L171.7,-76.0z" fill="#dde6ec"/><path d="M194.0,-69.4 L202.6,-79.8 L189.4,-89.4 L183.4,-82.1z" fill="#f0f2f4"/><path d="M203.1,-81.1 L204.1,-92.7 L190.7,-98.8 L190.0,-90.7z" fill="#b89e8c"/><path d="M203.8,-94.0 L197.0,-104.9 L185.6,-107.8 L190.3,-100.1z" fill="#b5c3cc"/><path d="M195.8,-106.0 L182.4,-114.3 L175.0,-114.6 L184.4,-108.9z" fill="#fbfcfd"/><path d="M121.3,-112.3 L109.4,-103.2 L121.6,-106.8 L129.9,-113.2z" fill="#95a3ac"/><path d="M108.4,-102.0 L103.6,-90.8 L117.2,-97.8 L120.6,-105.6z" fill="#fbfcfd"/><path d="M103.4,-89.5 L106.4,-78.0 L119.1,-88.4 L117.0,-96.4z" fill="#9a7b68"/><path d="M107.2,-76.7 L117.5,-67.0 L127.1,-80.3 L119.9,-87.1z" fill="#9a7b68"/><path d="M119.0,-66.0 L134.9,-59.7 L139.8,-74.9 L128.6,-79.4z" fill="#b5c3cc"/><path d="M136.9,-59.2 L155.6,-57.4 L154.9,-73.2 L141.8,-74.4z" fill="#a88a77"/><path d="M158.3,-75.5 L178.0,-81.2 L167.0,-92.5 L156.9,-89.6z" fill="#eceef1"/><path d="M179.5,-82.2 L188.6,-94.4 L173.2,-99.8 L168.5,-93.5z" fill="#f0f2f4"/><path d="M188.8,-95.7 L183.0,-108.6 L170.4,-107.7 L173.4,-101.1z" fill="#ffffff"/><path d="M181.8,-109.7 L163.8,-117.3 L159.9,-112.7 L169.2,-108.8z" fill="#ffffff"/><path d="M161.8,-117.6 L140.0,-116.4 L146.7,-112.4 L157.9,-113.0z" fill="#f0f2f4"/><path d="M138.1,-115.8 L122.8,-106.3 L136.9,-106.9 L144.8,-111.8z" fill="#f6f7f9"/><path d="M121.9,-105.1 L120.2,-91.7 L135.1,-98.8 L136.0,-105.7z" fill="#e2e5e9"/><path d="M120.7,-90.4 L133.4,-79.5 L142.1,-91.9 L135.6,-97.6z" fill="#f0f2f4"/><path d="M135.1,-78.7 L156.2,-75.3 L154.8,-89.5 L143.9,-91.2z" fill="#ffffff"/><path d="M170.9,-100.8 L156.6,-112.1 L154.6,-103.7 L154.6,-103.7z" fill="#eceef1"/><path d="M155.5,-112.2 L137.2,-103.4 L153.5,-103.7 L153.5,-103.7z" fill="#f6f7f9"/><path d="M137.1,-102.7 L151.4,-91.4 L153.4,-103.1 L153.4,-103.1z" fill="#eceef1"/><path d="M152.5,-91.4 L170.8,-100.2 L154.5,-103.0 L154.5,-103.0z" fill="#ffffff"/><circle cx="154" cy="-42" r="76.5" fill="none" stroke="#c9d3d9" stroke-width="3" opacity=".55"/><circle cx="133" cy="132" r="74" fill="#aeb2ba" opacity=".6"/><circle cx="131" cy="128" r="72" fill="#a7b3ba"/><path d="M137.5,199.3 L150.8,197.0 L155.1,193.6 L138.6,196.5z" fill="#eceef1"/><path d="M106.7,195.5 L119.5,198.7 L117.4,195.8 L101.4,191.9z" fill="#ffffff"/><path d="M121.6,199.0 L135.4,199.5 L136.5,196.6 L119.4,196.1z" fill="#c3cdd4"/><path d="M143.3,195.4 L156.7,192.6 L159.9,185.9 L144.6,189.1z" fill="#ffffff"/><path d="M158.5,192.1 L170.3,187.1 L175.0,179.7 L161.7,185.3z" fill="#f0f2f4"/><path d="M171.8,186.3 L180.9,179.6 L186.9,171.2 L176.5,178.9z" fill="#f0f2f4"/><path d="M84.8,182.7 L95.1,188.8 L90.9,181.7 L79.3,174.8z" fill="#f6f7f9"/><path d="M96.7,189.5 L109.2,193.7 L106.8,187.1 L92.5,182.4z" fill="#b5c3cc"/><path d="M111.2,194.1 L125.0,196.0 L124.4,189.7 L108.7,187.5z" fill="#ffffff"/><path d="M127.1,196.1 L141.2,195.7 L142.6,189.3 L126.5,189.8z" fill="#ffffff"/><path d="M140.7,188.4 L155.1,186.1 L156.5,176.5 L141.2,179.0z" fill="#eceef1"/><path d="M157.0,185.6 L170.0,181.2 L172.2,171.3 L158.4,176.0z" fill="#f6f7f9"/><path d="M171.7,180.4 L182.5,174.2 L185.3,163.9 L173.8,170.6z" fill="#d6dbe0"/><path d="M183.8,173.2 L191.7,165.4 L195.0,154.7 L186.6,162.9z" fill="#f6f7f9"/><path d="M70.5,165.7 L78.5,173.4 L75.7,163.2 L67.2,155.0z" fill="#f6f7f9"/><path d="M79.9,174.4 L90.7,180.6 L88.6,170.8 L77.1,164.2z" fill="#f0f2f4"/><path d="M92.4,181.4 L105.4,185.8 L104.1,176.2 L90.3,171.5z" fill="#c3cdd4"/><path d="M107.4,186.2 L121.8,188.5 L121.3,179.0 L106.0,176.6z" fill="#b5c3cc"/><path d="M123.8,188.6 L138.7,188.6 L139.1,179.1 L123.4,179.2z" fill="#c3cdd4"/><path d="M142.3,177.4 L156.9,175.0 L156.9,162.9 L142.3,165.4z" fill="#7f8d96"/><path d="M158.8,174.5 L172.1,169.9 L172.1,157.9 L158.8,162.4z" fill="#fbfcfd"/><path d="M173.7,169.2 L184.8,162.8 L184.8,150.8 L173.7,157.2z" fill="#ffffff"/><path d="M186.2,161.9 L194.5,154.1 L194.5,142.0 L186.2,149.8z" fill="#c3cdd4"/><path d="M195.4,152.9 L200.4,144.1 L200.4,132.1 L195.4,140.9z" fill="#c3cdd4"/><path d="M62.4,146.1 L68.1,154.8 L68.1,142.8 L62.4,134.1z" fill="#c3cdd4"/><path d="M69.1,155.9 L78.0,163.5 L78.0,151.4 L69.1,143.9z" fill="#cdd5db"/><path d="M79.4,164.4 L91.0,170.4 L91.0,158.4 L79.4,152.3z" fill="#7d6255"/><path d="M92.7,171.1 L106.3,175.2 L106.3,163.2 L92.7,159.1z" fill="#7f8d96"/><path d="M108.2,175.7 L123.0,177.7 L123.0,165.6 L108.2,163.6z" fill="#f6f7f9"/><path d="M125.1,177.8 L140.3,177.6 L140.3,165.5 L125.1,165.8z" fill="#f6f7f9"/><path d="M142.4,163.6 L157.6,161.0 L156.2,147.2 L141.8,149.7z" fill="#d6dbe0"/><path d="M159.5,160.5 L173.1,155.6 L170.9,142.1 L158.1,146.7z" fill="#d6dbe0"/><path d="M174.8,154.9 L186.1,148.1 L183.2,135.0 L172.6,141.4z" fill="#a88a77"/><path d="M187.3,147.1 L195.5,138.8 L192.2,126.2 L184.5,134.0z" fill="#fbfcfd"/><path d="M196.4,137.6 L200.9,128.3 L197.3,116.2 L193.0,125.0z" fill="#d6dbe0"/><path d="M201.3,127.1 L201.9,117.4 L198.3,105.9 L197.7,115.0z" fill="#dde6ec"/><path d="M59.9,119.2 L61.2,128.8 L64.8,116.7 L63.6,107.6z" fill="#f6f7f9"/><path d="M61.7,130.1 L66.8,139.2 L70.1,126.6 L65.2,117.9z" fill="#f0f2f4"/><path d="M67.8,140.4 L76.5,148.5 L79.3,135.3 L71.0,127.7z" fill="#fbfcfd"/><path d="M77.8,149.4 L89.6,155.9 L91.6,142.4 L80.6,136.3z" fill="#b5c3cc"/><path d="M91.3,156.7 L105.2,161.2 L106.5,147.4 L93.3,143.1z" fill="#c3cdd4"/><path d="M107.2,161.6 L122.5,163.8 L122.9,149.9 L108.4,147.8z" fill="#cdd5db"/><path d="M124.6,164.0 L140.3,163.8 L139.8,149.8 L125.0,150.0z" fill="#eceef1"/><path d="M141.1,147.7 L156.7,145.1 L153.8,130.4 L140.2,132.8z" fill="#b89e8c"/><path d="M158.6,144.6 L172.3,139.4 L167.9,125.3 L155.7,129.9z" fill="#cdd5db"/><path d="M173.9,138.6 L184.9,131.3 L179.1,118.1 L169.4,124.5z" fill="#dde6ec"/><path d="M186.1,130.3 L193.5,121.5 L186.8,109.4 L180.3,117.1z" fill="#d6dbe0"/><path d="M194.2,120.3 L197.5,110.6 L190.4,99.6 L187.5,108.2z" fill="#b5c3cc"/><path d="M197.6,109.3 L196.5,99.4 L189.6,89.6 L190.5,98.3z" fill="#f6f7f9"/><path d="M65.5,99.4 L64.4,109.4 L71.5,98.4 L72.4,89.7z" fill="#6d7b84"/><path d="M64.5,110.6 L67.8,120.3 L74.5,108.2 L71.6,99.7z" fill="#eceef1"/><path d="M68.5,121.5 L76.0,130.3 L81.7,117.2 L75.2,109.4z" fill="#eceef1"/><path d="M77.1,131.4 L88.2,138.6 L92.6,124.6 L82.9,118.2z" fill="#d6dbe0"/><path d="M89.7,139.4 L103.5,144.6 L106.4,129.9 L94.2,125.4z" fill="#fbfcfd"/><path d="M105.4,145.1 L121.0,147.8 L121.9,132.8 L108.2,130.4z" fill="#fbfcfd"/><path d="M123.0,147.9 L139.1,147.9 L138.1,132.9 L123.9,132.9z" fill="#eceef1"/><path d="M147.3,129.7 L162.9,125.3 L157.2,111.1 L144.7,114.7z" fill="#7d6255"/><path d="M164.6,124.5 L177.1,117.3 L169.0,104.5 L159.0,110.4z" fill="#d6dbe0"/><path d="M178.3,116.2 L186.2,106.8 L176.6,95.9 L170.2,103.5z" fill="#ffffff"/><path d="M186.9,105.6 L189.4,95.2 L179.3,86.3 L177.2,94.7z" fill="#b5c3cc"/><path d="M189.4,93.9 L186.2,83.5 L176.7,76.6 L179.2,85.0z" fill="#cdd5db"/><path d="M78.7,79.2 L73.4,89.2 L83.4,81.1 L87.7,73.0z" fill="#e2e5e9"/><path d="M73.1,90.5 L73.4,101.1 L83.4,90.9 L83.1,82.4z" fill="#eceef1"/><path d="M73.8,102.3 L79.6,112.2 L88.4,100.2 L83.7,92.2z" fill="#c3cdd4"/><path d="M80.6,113.4 L91.4,121.6 L98.2,107.9 L89.5,101.3z" fill="#b89e8c"/><path d="M93.0,122.4 L107.5,128.1 L111.4,113.3 L99.7,108.8z" fill="#fbfcfd"/><path d="M109.4,128.6 L126.1,131.0 L126.8,115.8 L113.3,113.8z" fill="#7d6255"/><path d="M128.2,131.1 L145.3,130.0 L142.6,115.0 L128.9,115.8z" fill="#c2a996"/><path d="M136.2,113.6 L152.8,110.5 L146.7,96.9 L135.0,99.1z" fill="#a88a77"/><path d="M154.6,109.9 L167.7,102.8 L157.7,91.3 L148.5,96.3z" fill="#f0f2f4"/><path d="M168.9,101.8 L176.3,92.1 L164.0,83.5 L158.9,90.3z" fill="#9a7b68"/><path d="M176.7,90.9 L177.0,80.1 L164.7,74.8 L164.5,82.3z" fill="#d3c2b5"/><path d="M176.6,78.9 L169.8,69.0 L159.5,66.6 L164.3,73.6z" fill="#eceef1"/><path d="M168.6,68.0 L155.8,60.7 L149.4,60.5 L158.3,65.6z" fill="#dde6ec"/><path d="M99.6,63.8 L89.1,72.4 L100.5,68.8 L107.8,62.8z" fill="#cdd5db"/><path d="M88.2,73.5 L84.3,84.0 L96.9,77.3 L99.6,69.9z" fill="#cdd5db"/><path d="M84.3,85.2 L87.7,95.8 L99.2,85.9 L96.9,78.5z" fill="#c3cdd4"/><path d="M88.5,96.9 L98.5,105.7 L107.1,93.2 L100.0,87.0z" fill="#c2a996"/><path d="M100.0,106.5 L115.0,112.1 L119.0,97.9 L108.5,94.0z" fill="#95a3ac"/><path d="M116.8,112.5 L134.2,113.7 L133.1,99.2 L120.9,98.3z" fill="#8a6f60"/><path d="M148.8,94.0 L161.2,84.2 L147.7,77.2 L141.2,82.2z" fill="#f0f2f4"/><path d="M161.8,83.1 L161.2,70.7 L147.9,69.7 L148.3,76.1z" fill="#e2e5e9"/><path d="M160.5,69.6 L147.0,60.3 L140.3,63.8 L147.2,68.6z" fill="#e2e5e9"/><path d="M145.3,59.7 L125.4,58.0 L128.3,62.3 L138.6,63.2z" fill="#fbfcfd"/><path d="M123.4,58.2 L106.3,64.8 L117.6,65.9 L126.4,62.6z" fill="#cdd5db"/><path d="M105.1,65.7 L98.9,77.5 L113.1,73.0 L116.4,66.9z" fill="#d6dbe0"/><path d="M98.9,78.7 L106.4,90.2 L117.1,80.1 L113.2,74.2z" fill="#e2e5e9"/><path d="M107.7,91.1 L125.5,97.0 L127.5,84.0 L118.4,81.0z" fill="#f6f7f9"/><path d="M127.4,97.1 L147.1,94.6 L139.6,82.9 L129.4,84.2z" fill="#ffffff"/><path d="M133.1,82.4 L146.7,72.2 L131.6,71.6 L131.6,71.6z" fill="#eceef1"/><path d="M146.5,71.5 L129.9,63.2 L131.5,71.0 L131.5,71.0z" fill="#cdd5db"/><path d="M128.9,63.2 L115.3,73.5 L130.4,71.1 L130.4,71.1z" fill="#f0f2f4"/><path d="M115.5,74.1 L132.1,82.4 L130.5,71.7 L130.5,71.7z" fill="#e2e5e9"/><circle cx="131" cy="128" r="70.5" fill="none" stroke="#c9d3d9" stroke-width="3" opacity=".55"/><circle cx="284" cy="111" r="76" fill="#aeb2ba" opacity=".6"/><circle cx="282" cy="107" r="74" fill="#a7b3ba"/><path d="M294.6,179.6 L307.7,176.1 L313.3,172.3 L297.0,176.5z" fill="#f0f2f4"/><path d="M262.5,178.1 L276.2,180.4 L275.2,177.5 L258.2,174.7z" fill="#f0f2f4"/><path d="M278.4,180.5 L292.5,179.9 L295.0,176.8 L277.4,177.6z" fill="#e2e5e9"/><path d="M291.3,176.7 L305.3,174.3 L308.2,167.4 L292.3,170.2z" fill="#dde6ec"/><path d="M307.3,173.7 L319.8,169.1 L324.4,161.6 L310.2,166.9z" fill="#b5c3cc"/><path d="M321.4,168.3 L331.4,161.7 L337.3,153.4 L326.0,160.8z" fill="#6d7b84"/><path d="M232.5,161.6 L242.4,168.2 L237.8,160.7 L226.5,153.2z" fill="#c3cdd4"/><path d="M244.1,169.0 L256.5,173.7 L253.6,166.8 L239.5,161.5z" fill="#f6f7f9"/><path d="M258.5,174.2 L272.5,176.6 L271.5,170.1 L255.5,167.4z" fill="#ffffff"/><path d="M274.6,176.8 L289.2,176.8 L290.2,170.3 L273.6,170.3z" fill="#e2e5e9"/><path d="M300.1,168.1 L314.3,164.6 L316.1,154.6 L301.0,158.3z" fill="#d6dbe0"/><path d="M316.2,164.0 L328.6,158.5 L331.1,148.2 L318.0,154.0z" fill="#cdd5db"/><path d="M330.1,157.6 L339.9,150.4 L343.0,139.6 L332.7,147.3z" fill="#6d7b84"/><path d="M341.0,149.3 L347.5,140.8 L351.1,129.5 L344.2,138.5z" fill="#e2e5e9"/><path d="M216.4,140.6 L222.8,149.1 L219.6,138.3 L212.8,129.3z" fill="#f6f7f9"/><path d="M224.0,150.2 L233.7,157.5 L231.1,147.1 L220.8,139.4z" fill="#6d7b84"/><path d="M235.2,158.4 L247.5,163.9 L245.7,153.9 L232.6,148.0z" fill="#7f8d96"/><path d="M249.4,164.5 L263.6,168.0 L262.6,158.2 L247.6,154.5z" fill="#dde6ec"/><path d="M265.6,168.3 L280.8,169.5 L280.8,159.8 L264.7,158.6z" fill="#dde6ec"/><path d="M282.9,169.5 L298.1,168.4 L299.0,158.6 L282.9,159.8z" fill="#cdd5db"/><path d="M290.2,158.1 L305.4,156.0 L305.4,143.6 L290.2,145.7z" fill="#b5c3cc"/><path d="M307.4,155.5 L321.3,151.3 L321.3,138.9 L307.4,143.2z" fill="#fbfcfd"/><path d="M323.1,150.6 L335.0,144.4 L335.0,132.0 L323.1,138.2z" fill="#ffffff"/><path d="M336.4,143.4 L345.6,135.7 L345.6,123.3 L336.4,131.1z" fill="#c3cdd4"/><path d="M346.6,134.5 L352.5,125.6 L352.5,113.3 L346.6,122.2z" fill="#d6dbe0"/><path d="M210.6,123.6 L215.8,132.6 L215.8,120.3 L210.6,111.2z" fill="#e2e5e9"/><path d="M216.8,133.8 L225.3,141.8 L225.3,129.5 L216.8,121.4z" fill="#c3cdd4"/><path d="M226.7,142.8 L238.1,149.3 L238.1,137.0 L226.7,130.4z" fill="#f6f7f9"/><path d="M239.8,150.1 L253.4,154.8 L253.4,142.4 L239.8,137.7z" fill="#f6f7f9"/><path d="M255.4,155.3 L270.4,157.8 L270.4,145.4 L255.4,142.9z" fill="#fbfcfd"/><path d="M272.5,158.0 L288.1,158.2 L288.1,145.8 L272.5,145.6z" fill="#dde6ec"/><path d="M299.0,142.9 L314.2,139.5 L312.5,125.5 L298.2,128.6z" fill="#e2e5e9"/><path d="M316.1,138.9 L329.5,133.3 L327.0,119.6 L314.4,124.9z" fill="#c3cdd4"/><path d="M331.1,132.5 L341.8,125.0 L338.7,111.7 L328.6,118.7z" fill="#dde6ec"/><path d="M343.0,123.9 L350.4,115.0 L346.9,102.2 L339.9,110.6z" fill="#e2e5e9"/><path d="M351.1,113.8 L354.6,104.0 L350.9,91.8 L347.6,101.0z" fill="#d6dbe0"/><path d="M209.0,101.2 L211.5,111.1 L215.1,98.4 L212.8,89.1z" fill="#e2e5e9"/><path d="M212.1,112.3 L218.6,121.5 L221.8,108.3 L215.7,99.7z" fill="#c2a996"/><path d="M219.6,122.6 L229.6,130.5 L232.2,116.9 L222.9,109.4z" fill="#fbfcfd"/><path d="M231.1,131.4 L243.9,137.5 L245.8,123.5 L233.7,117.8z" fill="#dde6ec"/><path d="M245.7,138.2 L260.6,142.2 L261.6,127.9 L247.6,124.2z" fill="#f6f7f9"/><path d="M262.6,142.5 L278.6,144.1 L278.8,129.8 L263.7,128.3z" fill="#b5c3cc"/><path d="M280.8,144.1 L296.9,143.2 L296.1,128.9 L280.9,129.8z" fill="#7d6255"/><path d="M291.3,127.4 L307.3,124.8 L304.5,109.7 L290.4,112.0z" fill="#8a6f60"/><path d="M309.3,124.3 L323.6,119.1 L319.0,104.7 L306.5,109.2z" fill="#cdd5db"/><path d="M325.2,118.3 L336.7,111.0 L330.8,97.4 L320.7,103.9z" fill="#c3cdd4"/><path d="M338.0,109.9 L345.8,101.0 L339.0,88.4 L332.1,96.3z" fill="#eceef1"/><path d="M346.6,99.7 L350.2,89.8 L342.9,78.5 L339.7,87.2z" fill="#eceef1"/><path d="M350.4,88.5 L349.5,78.3 L342.4,68.2 L343.1,77.2z" fill="#eceef1"/><path d="M214.9,76.9 L213.5,87.1 L220.8,75.9 L222.0,67.0z" fill="#6d7b84"/><path d="M213.6,88.4 L216.7,98.4 L223.6,86.1 L220.9,77.2z" fill="#cdd5db"/><path d="M217.4,99.7 L224.8,108.8 L230.8,95.3 L224.3,87.3z" fill="#f6f7f9"/><path d="M226.0,109.9 L237.1,117.5 L241.8,103.1 L232.0,96.4z" fill="#d6dbe0"/><path d="M238.7,118.3 L252.7,123.7 L255.7,108.7 L243.4,103.9z" fill="#b5c3cc"/><path d="M254.6,124.3 L270.5,127.2 L271.6,111.8 L257.6,109.2z" fill="#b89e8c"/><path d="M272.6,127.4 L289.2,127.6 L288.3,112.1 L273.7,112.0z" fill="#ffffff"/><path d="M294.0,109.4 L310.6,105.7 L305.5,90.9 L292.1,93.9z" fill="#9a7b68"/><path d="M312.5,105.1 L326.2,98.3 L318.4,84.7 L307.3,90.2z" fill="#d3c2b5"/><path d="M327.6,97.3 L337.0,88.1 L327.4,76.3 L319.8,83.8z" fill="#cdd5db"/><path d="M337.8,86.9 L341.8,76.3 L331.4,66.6 L328.2,75.1z" fill="#f0f2f4"/><path d="M342.0,75.0 L340.2,64.2 L330.1,56.6 L331.6,65.3z" fill="#eceef1"/><path d="M339.6,62.9 L332.2,53.0 L323.6,47.4 L329.6,55.3z" fill="#b5c3cc"/><path d="M230.6,54.2 L223.8,64.2 L233.9,56.4 L239.4,48.3z" fill="#d6dbe0"/><path d="M223.3,65.5 L222.2,76.3 L232.5,66.4 L233.5,57.7z" fill="#dde6ec"/><path d="M222.4,77.6 L227.0,88.1 L236.5,76.2 L232.8,67.7z" fill="#f6f7f9"/><path d="M227.9,89.3 L237.9,98.3 L245.4,84.6 L237.4,77.4z" fill="#a88a77"/><path d="M239.3,99.2 L253.5,105.8 L258.2,90.8 L246.9,85.6z" fill="#7d6255"/><path d="M255.4,106.4 L272.2,109.7 L273.7,94.1 L260.1,91.4z" fill="#7d6255"/><path d="M274.3,109.9 L291.9,109.7 L290.0,94.1 L275.8,94.3z" fill="#b89e8c"/><path d="M285.8,92.3 L303.1,89.4 L297.2,75.3 L285.1,77.4z" fill="#9a7b68"/><path d="M304.9,88.8 L318.8,81.8 L308.7,69.8 L299.0,74.7z" fill="#f0f2f4"/><path d="M320.1,80.8 L328.2,71.0 L315.7,61.9 L310.0,68.8z" fill="#ffffff"/><path d="M328.7,69.7 L329.5,58.7 L316.8,53.0 L316.2,60.7z" fill="#d6dbe0"/><path d="M329.2,57.5 L322.6,47.2 L311.8,44.5 L316.4,51.7z" fill="#f6f7f9"/><path d="M321.5,46.1 L308.7,38.3 L301.8,38.0 L310.7,43.5z" fill="#cdd5db"/><path d="M250.8,40.4 L239.6,49.1 L251.1,45.6 L259.0,39.6z" fill="#ffffff"/><path d="M238.7,50.2 L234.1,60.9 L247.0,54.2 L250.2,46.7z" fill="#c2a996"/><path d="M234.0,62.1 L236.9,73.0 L249.0,63.1 L246.9,55.5z" fill="#dde6ec"/><path d="M237.7,74.2 L247.6,83.4 L256.6,70.8 L249.7,64.3z" fill="#c3cdd4"/><path d="M249.0,84.3 L264.1,90.3 L268.7,75.8 L258.1,71.6z" fill="#f0f2f4"/><path d="M266.0,90.7 L283.8,92.4 L283.0,77.4 L270.6,76.3z" fill="#b89e8c"/><path d="M286.3,75.2 L304.9,69.7 L294.4,59.0 L284.8,61.9z" fill="#d6dbe0"/><path d="M306.3,68.8 L314.9,57.2 L300.2,52.2 L295.8,58.1z" fill="#f6f7f9"/><path d="M315.0,56.0 L309.4,43.7 L297.5,44.6 L300.4,50.9z" fill="#d6dbe0"/><path d="M308.2,42.7 L291.1,35.5 L287.5,39.9 L296.3,43.6z" fill="#e2e5e9"/><path d="M289.2,35.2 L268.6,36.5 L275.0,40.2 L285.6,39.6z" fill="#ffffff"/><path d="M266.8,37.0 L252.3,46.1 L265.7,45.5 L273.1,40.8z" fill="#f0f2f4"/><path d="M251.5,47.3 L249.9,60.0 L264.1,53.1 L264.9,46.6z" fill="#f0f2f4"/><path d="M250.5,61.2 L262.5,71.5 L270.8,59.7 L264.6,54.3z" fill="#eceef1"/><path d="M264.2,72.2 L284.3,75.4 L282.8,62.0 L272.5,60.4z" fill="#e2e5e9"/><path d="M288.4,59.4 L297.2,47.0 L282.7,49.0 L282.7,49.0z" fill="#eceef1"/><path d="M296.8,46.3 L276.6,40.9 L282.3,48.4 L282.3,48.4z" fill="#cdd5db"/><path d="M275.6,41.2 L266.8,53.6 L281.3,48.6 L281.3,48.6z" fill="#f0f2f4"/><path d="M267.2,54.2 L287.4,59.6 L281.7,49.2 L281.7,49.2z" fill="#eceef1"/><circle cx="282" cy="107" r="72.5" fill="none" stroke="#c9d3d9" stroke-width="3" opacity=".55"/><circle cx="-6" cy="142" r="64" fill="#aeb2ba" opacity=".6"/><circle cx="-8" cy="138" r="62" fill="#a7b3ba"/><path d="M-2.1,199.4 L9.3,197.3 L13.1,194.4 L-1.1,196.9z" fill="#e2e5e9"/><path d="M-28.6,196.3 L-17.6,198.9 L-19.4,196.4 L-33.1,193.1z" fill="#eceef1"/><path d="M-15.8,199.2 L-3.9,199.5 L-2.9,197.1 L-17.6,196.7z" fill="#b5c3cc"/><path d="M-5.2,196.7 L6.9,195.4 L8.7,189.8 L-4.9,191.3z" fill="#ffffff"/><path d="M8.5,195.0 L19.6,191.8 L22.9,185.7 L10.4,189.4z" fill="#f6f7f9"/><path d="M21.0,191.2 L30.2,186.2 L34.8,179.5 L24.4,185.1z" fill="#f6f7f9"/><path d="M-43.5,187.9 L-33.8,192.5 L-36.7,186.6 L-47.8,181.4z" fill="#dde6ec"/><path d="M-32.2,193.0 L-20.8,195.7 L-22.3,190.2 L-35.2,187.1z" fill="#e2e5e9"/><path d="M-19.1,196.0 L-6.9,196.7 L-6.7,191.3 L-20.5,190.5z" fill="#f0f2f4"/><path d="M-6.3,190.4 L6.3,189.3 L7.2,181.1 L-6.3,182.3z" fill="#e2e5e9"/><path d="M8.1,189.0 L19.9,186.0 L21.4,177.6 L8.9,180.8z" fill="#eceef1"/><path d="M21.4,185.5 L31.7,180.8 L33.9,172.1 L23.0,177.1z" fill="#dde6ec"/><path d="M33.0,180.0 L41.0,173.9 L43.7,164.8 L35.1,171.3z" fill="#ffffff"/><path d="M41.9,172.9 L47.2,165.8 L50.2,156.3 L44.6,163.9z" fill="#fbfcfd"/><path d="M-62.7,166.7 L-57.1,173.7 L-59.7,164.7 L-65.7,157.2z" fill="#ffffff"/><path d="M-56.1,174.7 L-47.8,180.7 L-50.0,172.0 L-58.8,165.7z" fill="#eceef1"/><path d="M-46.5,181.4 L-36.1,185.9 L-37.6,177.6 L-48.6,172.8z" fill="#c3cdd4"/><path d="M-34.5,186.5 L-22.6,189.3 L-23.3,181.1 L-36.0,178.1z" fill="#f6f7f9"/><path d="M-20.8,189.5 L-8.1,190.4 L-8.1,182.3 L-21.6,181.3z" fill="#95a3ac"/><path d="M2.0,180.5 L14.6,178.4 L14.6,168.0 L2.0,170.1z" fill="#f0f2f4"/><path d="M16.2,178.0 L27.6,174.0 L27.6,163.7 L16.2,167.6z" fill="#dde6ec"/><path d="M29.0,173.4 L38.5,167.9 L38.5,157.5 L29.0,163.0z" fill="#fbfcfd"/><path d="M39.7,167.0 L46.8,160.3 L46.8,149.9 L39.7,156.7z" fill="#f6f7f9"/><path d="M47.6,159.3 L51.9,151.7 L51.9,141.4 L47.6,149.0z" fill="#d6dbe0"/><path d="M-67.0,153.8 L-62.0,161.2 L-62.0,150.9 L-67.0,143.4z" fill="#d6dbe0"/><path d="M-61.1,162.2 L-53.4,168.7 L-53.4,158.3 L-61.1,151.8z" fill="#b5c3cc"/><path d="M-52.2,169.4 L-42.2,174.6 L-42.2,164.2 L-52.2,159.1z" fill="#dde6ec"/><path d="M-40.7,175.2 L-29.0,178.7 L-29.0,168.4 L-40.7,164.8z" fill="#ffffff"/><path d="M-27.3,179.1 L-14.6,180.8 L-14.6,170.4 L-27.3,168.7z" fill="#eceef1"/><path d="M-12.8,180.9 L0.2,180.7 L0.2,170.3 L-12.8,170.5z" fill="#c3cdd4"/><path d="M1.7,168.6 L14.8,166.4 L13.6,154.6 L1.3,156.7z" fill="#cdd5db"/><path d="M16.4,166.0 L28.2,161.8 L26.3,150.2 L15.2,154.1z" fill="#9a7b68"/><path d="M29.6,161.2 L39.4,155.3 L36.9,144.1 L27.7,149.5z" fill="#8a6f60"/><path d="M40.5,154.5 L47.5,147.3 L44.6,136.5 L38.0,143.2z" fill="#f0f2f4"/><path d="M48.2,146.3 L52.2,138.3 L49.1,127.9 L45.4,135.5z" fill="#cdd5db"/><path d="M52.5,137.2 L53.1,128.9 L50.0,119.0 L49.4,126.8z" fill="#cdd5db"/><path d="M-69.2,130.3 L-68.1,138.7 L-65.0,128.2 L-66.1,120.3z" fill="#fbfcfd"/><path d="M-67.7,139.7 L-63.3,147.6 L-60.5,136.7 L-64.6,129.3z" fill="#f6f7f9"/><path d="M-62.5,148.6 L-55.0,155.6 L-52.6,144.3 L-59.7,137.7z" fill="#f0f2f4"/><path d="M-53.8,156.4 L-43.8,162.0 L-42.0,150.4 L-51.5,145.1z" fill="#95a3ac"/><path d="M-42.3,162.6 L-30.3,166.5 L-29.2,154.7 L-40.5,151.0z" fill="#d6dbe0"/><path d="M-28.6,166.9 L-15.4,168.8 L-15.1,156.9 L-27.5,155.0z" fill="#f6f7f9"/><path d="M-13.6,169.0 L-0.1,168.8 L-0.5,156.8 L-13.3,157.0z" fill="#f0f2f4"/><path d="M7.8,154.1 L20.6,150.7 L17.4,138.3 L6.2,141.2z" fill="#8a6f60"/><path d="M22.1,150.2 L32.9,144.8 L28.5,133.1 L19.0,137.8z" fill="#fbfcfd"/><path d="M34.2,144.1 L42.3,137.1 L36.9,126.2 L29.7,132.3z" fill="#cdd5db"/><path d="M43.1,136.2 L47.9,128.1 L41.9,118.2 L37.7,125.2z" fill="#d3c2b5"/><path d="M48.3,127.1 L49.4,118.6 L43.3,109.6 L42.3,117.1z" fill="#d6dbe0"/><path d="M-65.3,117.8 L-64.5,126.3 L-58.5,116.4 L-59.2,108.9z" fill="#cdd5db"/><path d="M-64.2,127.4 L-59.7,135.5 L-54.2,124.6 L-58.2,117.5z" fill="#eceef1"/><path d="M-58.9,136.5 L-51.0,143.5 L-46.5,131.8 L-53.4,125.6z" fill="#cdd5db"/><path d="M-49.8,144.3 L-39.1,149.8 L-35.9,137.4 L-45.3,132.6z" fill="#d6dbe0"/><path d="M-37.6,150.4 L-24.9,153.8 L-23.2,141.1 L-34.4,138.0z" fill="#eceef1"/><path d="M-23.2,154.1 L-9.5,155.4 L-9.4,142.5 L-21.5,141.4z" fill="#c3cdd4"/><path d="M-7.7,155.4 L6.1,154.3 L4.5,141.5 L-7.7,142.5z" fill="#a88a77"/><path d="M-7.0,140.7 L7.6,139.2 L4.7,126.3 L-7.0,127.5z" fill="#ffffff"/><path d="M9.3,138.8 L22.3,134.4 L16.9,122.5 L6.4,126.0z" fill="#cdd5db"/><path d="M23.7,133.8 L33.7,127.1 L26.4,116.4 L18.3,121.8z" fill="#e2e5e9"/><path d="M34.6,126.1 L40.6,117.8 L32.1,108.7 L27.3,115.4z" fill="#e2e5e9"/><path d="M41.0,116.7 L42.2,107.6 L33.5,100.3 L32.5,107.6z" fill="#f6f7f9"/><path d="M42.0,106.5 L38.4,97.7 L30.4,92.1 L33.3,99.2z" fill="#dde6ec"/><path d="M-54.5,97.9 L-58.0,106.7 L-49.4,99.4 L-46.5,92.2z" fill="#fbfcfd"/><path d="M-58.2,107.8 L-56.9,116.9 L-48.5,107.8 L-49.5,100.5z" fill="#95a3ac"/><path d="M-56.5,117.9 L-50.5,126.2 L-43.2,115.5 L-48.0,108.8z" fill="#fbfcfd"/><path d="M-49.5,127.2 L-39.5,133.9 L-34.2,121.8 L-42.2,116.5z" fill="#c3cdd4"/><path d="M-38.1,134.5 L-25.1,138.8 L-22.3,126.0 L-32.7,122.5z" fill="#c3cdd4"/><path d="M-23.4,139.2 L-8.8,140.7 L-8.8,127.5 L-20.6,126.4z" fill="#dde6ec"/><path d="M5.7,124.3 L18.6,119.6 L11.3,108.8 L2.2,112.1z" fill="#b89e8c"/><path d="M19.9,118.9 L28.6,111.3 L18.6,102.8 L12.5,108.1z" fill="#c3cdd4"/><path d="M29.3,110.3 L32.2,101.2 L21.4,95.4 L19.3,101.8z" fill="#d6dbe0"/><path d="M32.2,100.2 L28.9,91.2 L19.0,88.1 L21.4,94.4z" fill="#dde6ec"/><path d="M28.2,90.2 L19.2,82.8 L12.0,81.9 L18.3,87.1z" fill="#d6dbe0"/><path d="M-29.3,80.0 L-40.3,86.3 L-31.5,84.3 L-23.7,79.9z" fill="#dde6ec"/><path d="M-41.3,87.2 L-47.2,95.7 L-36.6,91.1 L-32.5,85.1z" fill="#f0f2f4"/><path d="M-47.6,96.7 L-47.4,106.0 L-36.8,98.6 L-37.0,92.1z" fill="#6d7b84"/><path d="M-47.0,107.0 L-40.7,115.4 L-32.1,105.5 L-36.5,99.6z" fill="#cdd5db"/><path d="M-39.7,116.2 L-28.4,122.4 L-23.1,110.7 L-31.0,106.4z" fill="#7f8d96"/><path d="M-26.9,122.9 L-12.6,125.6 L-11.6,113.1 L-21.6,111.2z" fill="#c3cdd4"/><path d="M-10.9,125.7 L4.1,124.6 L0.6,112.4 L-9.9,113.2z" fill="#dde6ec"/><path d="M-4.3,111.4 L11.3,106.7 L2.4,97.8 L-5.6,100.2z" fill="#f6f7f9"/><path d="M12.4,106.0 L19.5,96.2 L7.3,92.0 L3.6,97.0z" fill="#cdd5db"/><path d="M19.7,95.2 L14.9,84.9 L5.0,85.7 L7.4,91.0z" fill="#fbfcfd"/><path d="M13.9,84.1 L-0.4,78.1 L-3.4,81.8 L4.0,84.9z" fill="#e2e5e9"/><path d="M-2.1,77.8 L-19.3,78.9 L-13.9,82.1 L-5.1,81.5z" fill="#d6dbe0"/><path d="M-20.8,79.4 L-32.9,87.0 L-21.7,86.5 L-15.5,82.5z" fill="#fbfcfd"/><path d="M-33.6,88.0 L-34.8,98.6 L-23.0,92.9 L-22.4,87.4z" fill="#ffffff"/><path d="M-34.4,99.6 L-24.2,108.3 L-17.3,98.4 L-22.6,93.9z" fill="#d6dbe0"/><path d="M-22.8,108.9 L-6.0,111.5 L-7.3,100.3 L-15.9,98.9z" fill="#f6f7f9"/><path d="M-4.9,98.6 L5.3,89.1 L-7.5,89.4 L-7.5,89.4z" fill="#e2e5e9"/><path d="M5.1,88.5 L-10.3,82.3 L-7.7,88.9 L-7.7,88.9z" fill="#fbfcfd"/><path d="M-11.1,82.4 L-21.3,91.9 L-8.5,89.0 L-8.5,89.0z" fill="#f6f7f9"/><path d="M-21.1,92.4 L-5.7,98.7 L-8.3,89.6 L-8.3,89.6z" fill="#ffffff"/><circle cx="-8" cy="138" r="60.5" fill="none" stroke="#c9d3d9" stroke-width="3" opacity=".55"/><circle cx="118" cy="265" r="75" fill="#aeb2ba" opacity=".6"/><circle cx="116" cy="261" r="73" fill="#a7b3ba"/><path d="M121.9,333.4 L135.4,331.1 L139.7,327.7 L122.9,330.5z" fill="#f6f7f9"/><path d="M90.8,329.3 L103.7,332.6 L101.4,329.6 L85.3,325.5z" fill="#dde6ec"/><path d="M105.8,332.9 L119.8,333.5 L120.8,330.6 L103.4,329.9z" fill="#c3cdd4"/><path d="M131.0,329.0 L144.4,325.8 L147.9,318.8 L132.7,322.5z" fill="#d6dbe0"/><path d="M146.2,325.2 L157.8,319.8 L162.8,312.2 L149.7,318.2z" fill="#dde6ec"/><path d="M70.9,317.7 L81.7,323.6 L77.7,316.5 L65.5,309.8z" fill="#dde6ec"/><path d="M83.5,324.3 L96.4,328.1 L94.2,321.6 L79.5,317.2z" fill="#6d7b84"/><path d="M98.4,328.5 L112.6,330.1 L112.3,323.7 L96.2,321.9z" fill="#dde6ec"/><path d="M114.7,330.1 L129.0,329.3 L130.6,322.8 L114.4,323.8z" fill="#ffffff"/><path d="M132.9,321.4 L147.0,318.1 L148.8,308.3 L133.8,311.7z" fill="#f6f7f9"/><path d="M148.9,317.5 L161.2,312.2 L163.7,302.0 L150.6,307.7z" fill="#e2e5e9"/><path d="M162.8,311.3 L172.6,304.3 L175.6,293.7 L165.3,301.1z" fill="#fbfcfd"/><path d="M173.7,303.2 L180.3,294.9 L183.8,283.7 L176.8,292.6z" fill="#fbfcfd"/><path d="M50.9,293.6 L57.1,302.0 L54.0,291.4 L47.4,282.4z" fill="#fbfcfd"/><path d="M58.2,303.1 L67.6,310.4 L65.1,300.1 L55.1,292.5z" fill="#fbfcfd"/><path d="M69.1,311.3 L81.2,316.8 L79.3,307.0 L66.6,301.0z" fill="#eceef1"/><path d="M83.0,317.5 L96.9,321.0 L95.9,311.4 L81.2,307.6z" fill="#cdd5db"/><path d="M98.9,321.4 L113.8,322.7 L113.8,313.1 L98.0,311.7z" fill="#cdd5db"/><path d="M115.9,322.7 L130.9,321.7 L131.8,312.0 L115.9,313.1z" fill="#b5c3cc"/><path d="M129.5,310.9 L144.2,308.1 L144.2,295.9 L129.5,298.7z" fill="#e2e5e9"/><path d="M146.1,307.6 L159.3,302.8 L159.3,290.6 L146.1,295.4z" fill="#e2e5e9"/><path d="M161.0,302.0 L171.9,295.4 L171.9,283.2 L161.0,289.8z" fill="#eceef1"/><path d="M173.2,294.4 L181.3,286.3 L181.3,274.1 L173.2,282.2z" fill="#c2a996"/><path d="M182.2,285.1 L186.8,276.1 L186.8,263.9 L182.2,272.9z" fill="#ffffff"/><path d="M47.1,280.6 L53.2,289.3 L53.2,277.1 L47.1,268.4z" fill="#c3cdd4"/><path d="M54.3,290.4 L63.7,297.9 L63.7,285.7 L54.3,278.2z" fill="#dde6ec"/><path d="M65.1,298.8 L77.2,304.7 L77.2,292.5 L65.1,286.6z" fill="#7f8d96"/><path d="M78.9,305.4 L92.9,309.3 L92.9,297.1 L78.9,293.2z" fill="#d6dbe0"/><path d="M94.9,309.7 L110.0,311.5 L110.0,299.3 L94.9,297.5z" fill="#c3cdd4"/><path d="M112.1,311.6 L127.4,311.1 L127.4,298.9 L112.1,299.4z" fill="#c3cdd4"/><path d="M121.8,297.5 L137.5,295.6 L136.3,281.6 L121.5,283.4z" fill="#e2e5e9"/><path d="M139.5,295.2 L153.9,291.0 L151.9,277.2 L138.3,281.2z" fill="#c3cdd4"/><path d="M155.7,290.3 L168.0,284.0 L165.2,270.6 L153.7,276.5z" fill="#ffffff"/><path d="M169.4,283.1 L178.8,275.1 L175.5,262.2 L166.7,269.7z" fill="#eceef1"/><path d="M179.8,274.0 L185.6,264.8 L182.0,252.4 L176.5,261.0z" fill="#d6dbe0"/><path d="M186.1,263.6 L188.1,253.8 L184.4,241.9 L182.5,251.1z" fill="#b5c3cc"/><path d="M44.6,259.6 L48.7,269.1 L52.1,256.4 L48.3,247.4z" fill="#95a3ac"/><path d="M49.4,270.3 L57.2,278.9 L60.2,265.7 L52.9,257.6z" fill="#d6dbe0"/><path d="M58.4,280.0 L69.4,287.1 L71.7,273.5 L61.4,266.8z" fill="#eceef1"/><path d="M71.0,287.9 L84.5,293.2 L86.1,279.3 L73.4,274.3z" fill="#d6dbe0"/><path d="M86.4,293.7 L101.6,296.8 L102.3,282.7 L88.0,279.8z" fill="#ffffff"/><path d="M103.7,297.0 L119.7,297.6 L119.4,283.5 L104.4,282.9z" fill="#8a6f60"/><path d="M118.1,281.5 L134.3,279.9 L132.3,264.9 L118.0,266.2z" fill="#c2a996"/><path d="M136.3,279.6 L151.2,275.4 L147.4,260.9 L134.3,264.5z" fill="#d3c2b5"/><path d="M153.0,274.7 L165.5,268.3 L160.1,254.5 L149.1,260.2z" fill="#9a7b68"/><path d="M166.9,267.3 L176.1,259.0 L169.6,246.2 L161.5,253.5z" fill="#e2e5e9"/><path d="M177.0,257.8 L182.2,248.3 L175.2,236.7 L170.6,245.1z" fill="#c3cdd4"/><path d="M182.6,247.0 L183.5,237.0 L176.3,226.5 L175.6,235.4z" fill="#ffffff"/><path d="M51.6,227.2 L48.5,237.1 L55.7,226.5 L58.4,217.8z" fill="#cdd5db"/><path d="M48.4,238.3 L49.8,248.4 L56.8,236.6 L55.6,227.8z" fill="#f6f7f9"/><path d="M50.3,249.6 L56.0,259.1 L62.3,246.2 L57.3,237.8z" fill="#eceef1"/><path d="M57.0,260.2 L66.6,268.3 L71.8,254.4 L63.3,247.3z" fill="#ffffff"/><path d="M68.1,269.2 L80.9,275.5 L84.6,260.8 L73.2,255.4z" fill="#fbfcfd"/><path d="M82.7,276.1 L97.8,280.0 L99.7,264.9 L86.4,261.5z" fill="#eceef1"/><path d="M99.8,280.3 L116.1,281.5 L116.0,266.3 L101.7,265.2z" fill="#c2a996"/><path d="M123.4,263.9 L140.1,261.0 L135.8,246.1 L122.3,248.4z" fill="#c2a996"/><path d="M142.0,260.4 L156.4,254.4 L149.2,240.7 L137.7,245.6z" fill="#d3c2b5"/><path d="M157.9,253.5 L168.3,244.8 L159.1,232.8 L150.8,239.8z" fill="#ffffff"/><path d="M169.2,243.7 L174.5,233.5 L164.3,223.4 L160.1,231.7z" fill="#f0f2f4"/><path d="M174.8,232.2 L174.3,221.5 L164.3,213.5 L164.6,222.2z" fill="#d3c2b5"/><path d="M173.9,220.2 L167.9,210.1 L159.0,204.2 L163.9,212.2z" fill="#b5c3cc"/><path d="M59.2,217.3 L56.8,227.9 L67.1,218.6 L69.0,210.1z" fill="#dde6ec"/><path d="M56.8,229.2 L60.1,239.8 L69.8,228.4 L67.1,219.9z" fill="#fbfcfd"/><path d="M60.9,241.0 L69.5,250.3 L77.5,237.1 L70.5,229.6z" fill="#ffffff"/><path d="M70.8,251.3 L83.9,258.3 L89.3,243.8 L78.8,238.1z" fill="#9a7b68"/><path d="M85.7,259.0 L101.8,263.1 L104.1,247.8 L91.1,244.5z" fill="#fbfcfd"/><path d="M103.9,263.4 L121.3,264.0 L120.2,248.6 L106.2,248.1z" fill="#a88a77"/><path d="M120.0,246.5 L137.0,243.6 L131.1,229.7 L119.2,231.7z" fill="#9a7b68"/><path d="M138.8,243.0 L152.5,236.1 L142.5,224.2 L132.9,229.1z" fill="#9a7b68"/><path d="M153.7,235.1 L161.6,225.3 L149.2,216.4 L143.7,223.3z" fill="#95a3ac"/><path d="M162.1,224.1 L162.8,213.2 L150.3,207.6 L149.7,215.2z" fill="#95a3ac"/><path d="M162.5,212.0 L156.0,201.9 L145.4,199.3 L149.9,206.4z" fill="#c3cdd4"/><path d="M154.9,200.8 L142.2,193.2 L135.4,192.9 L144.2,198.2z" fill="#f0f2f4"/><path d="M85.1,195.4 L74.1,204.0 L85.5,200.5 L93.2,194.5z" fill="#f6f7f9"/><path d="M73.2,205.1 L68.8,215.6 L81.5,209.0 L84.6,201.6z" fill="#ffffff"/><path d="M68.7,216.9 L71.6,227.6 L83.5,217.8 L81.4,210.3z" fill="#e2e5e9"/><path d="M72.4,228.8 L82.2,237.9 L91.1,225.3 L84.2,218.9z" fill="#fbfcfd"/><path d="M83.6,238.7 L98.6,244.6 L103.0,230.3 L92.5,226.2z" fill="#ffffff"/><path d="M100.4,245.0 L118.0,246.6 L117.2,231.8 L104.9,230.7z" fill="#d3c2b5"/><path d="M131.5,227.4 L145.5,218.3 L132.2,210.4 L125.0,215.1z" fill="#d6dbe0"/><path d="M146.3,217.1 L147.5,204.6 L133.6,202.8 L133.0,209.3z" fill="#e2e5e9"/><path d="M146.9,203.4 L134.7,193.3 L126.8,196.5 L133.0,201.7z" fill="#e2e5e9"/><path d="M133.0,192.7 L113.2,189.8 L114.9,194.3 L125.1,195.8z" fill="#eceef1"/><path d="M111.2,189.9 L93.0,195.6 L103.5,197.4 L112.9,194.4z" fill="#cdd5db"/><path d="M91.6,196.5 L83.5,208.0 L98.0,204.2 L102.1,198.2z" fill="#fbfcfd"/><path d="M83.4,209.2 L89.3,221.3 L100.9,211.6 L97.9,205.4z" fill="#fbfcfd"/><path d="M90.5,222.3 L107.6,229.1 L110.9,216.1 L102.1,212.6z" fill="#ffffff"/><path d="M109.5,229.4 L129.8,228.0 L123.3,215.7 L112.8,216.4z" fill="#f6f7f9"/><path d="M124.6,213.3 L129.9,200.3 L116.7,203.7 L116.7,203.7z" fill="#ffffff"/><path d="M129.4,199.7 L108.3,196.5 L116.2,203.1 L116.2,203.1z" fill="#cdd5db"/><path d="M107.4,196.8 L102.1,209.8 L115.3,203.5 L115.3,203.5z" fill="#f0f2f4"/><path d="M102.6,210.4 L123.7,213.6 L115.8,204.0 L115.8,204.0z" fill="#d6dbe0"/><circle cx="116" cy="261" r="71.5" fill="none" stroke="#c9d3d9" stroke-width="3" opacity=".55"/><circle cx="268" cy="246" r="74" fill="#aeb2ba" opacity=".6"/><circle cx="266" cy="242" r="72" fill="#a7b3ba"/><path d="M273.7,313.2 L286.9,310.6 L291.5,307.2 L275.1,310.4z" fill="#cdd5db"/><path d="M242.8,309.9 L255.8,312.9 L253.9,310.0 L237.8,306.3z" fill="#ffffff"/><path d="M257.8,313.1 L271.7,313.4 L273.1,310.5 L255.9,310.3z" fill="#b5c3cc"/><path d="M270.0,310.1 L284.0,308.5 L286.2,302.0 L270.4,303.8z" fill="#e2e5e9"/><path d="M285.9,308.1 L298.6,304.2 L302.6,297.2 L288.2,301.6z" fill="#cdd5db"/><path d="M300.3,303.5 L310.9,297.6 L316.3,289.8 L304.3,296.5z" fill="#b5c3cc"/><path d="M225.3,300.3 L236.7,305.5 L233.4,298.7 L220.3,292.8z" fill="#95a3ac"/><path d="M238.5,306.1 L251.8,309.1 L250.3,302.8 L235.2,299.3z" fill="#d6dbe0"/><path d="M253.8,309.4 L268.0,310.2 L268.3,303.9 L252.3,303.0z" fill="#eceef1"/><path d="M273.9,302.6 L288.3,300.5 L289.6,290.9 L274.2,293.1z" fill="#fbfcfd"/><path d="M290.3,300.1 L303.5,295.9 L305.5,286.0 L291.6,290.5z" fill="#6d7b84"/><path d="M305.2,295.1 L316.2,289.0 L319.0,278.8 L307.2,285.3z" fill="#cdd5db"/><path d="M317.6,288.1 L325.9,280.5 L329.1,269.8 L320.4,277.9z" fill="#ffffff"/><path d="M204.7,278.7 L212.4,286.5 L209.5,276.2 L201.4,267.9z" fill="#ffffff"/><path d="M213.7,287.5 L224.2,293.9 L222.0,284.0 L210.8,277.2z" fill="#cdd5db"/><path d="M225.9,294.7 L238.7,299.3 L237.3,289.7 L223.7,284.8z" fill="#e2e5e9"/><path d="M240.6,299.8 L254.9,302.3 L254.4,292.8 L239.2,290.2z" fill="#cdd5db"/><path d="M257.0,302.5 L271.8,302.7 L272.2,293.2 L256.4,293.0z" fill="#e2e5e9"/><path d="M272.6,291.8 L287.5,289.9 L287.5,277.9 L272.6,279.7z" fill="#b89e8c"/><path d="M289.4,289.5 L303.1,285.5 L303.1,273.5 L289.4,277.5z" fill="#ffffff"/><path d="M304.9,284.9 L316.6,279.0 L316.6,266.9 L304.9,272.8z" fill="#fbfcfd"/><path d="M318.1,278.1 L327.2,270.6 L327.2,258.6 L318.1,266.0z" fill="#c3cdd4"/><path d="M328.2,269.5 L334.2,260.9 L334.2,248.9 L328.2,257.5z" fill="#6d7b84"/><path d="M196.3,257.3 L201.0,266.2 L201.0,254.1 L196.3,245.3z" fill="#6d7b84"/><path d="M201.9,267.3 L210.0,275.2 L210.0,263.2 L201.9,255.3z" fill="#d6dbe0"/><path d="M211.3,276.2 L222.2,282.7 L222.2,270.7 L211.3,264.2z" fill="#f6f7f9"/><path d="M223.8,283.5 L236.9,288.1 L236.9,276.1 L223.8,271.4z" fill="#ffffff"/><path d="M238.8,288.6 L253.4,291.3 L253.4,279.2 L238.8,276.6z" fill="#dde6ec"/><path d="M255.4,291.5 L270.6,291.9 L270.6,279.8 L255.4,279.4z" fill="#cdd5db"/><path d="M270.4,278.1 L285.9,276.4 L284.9,262.5 L270.2,264.1z" fill="#fbfcfd"/><path d="M287.9,276.0 L302.3,272.0 L300.4,258.4 L286.8,262.2z" fill="#f6f7f9"/><path d="M304.0,271.3 L316.3,265.3 L313.7,252.0 L302.1,257.7z" fill="#7f8d96"/><path d="M317.8,264.4 L327.3,256.6 L324.1,243.8 L315.2,251.1z" fill="#cdd5db"/><path d="M328.3,255.5 L334.3,246.5 L330.8,234.2 L325.1,242.7z" fill="#cdd5db"/><path d="M334.9,245.3 L337.1,235.7 L333.4,224.0 L331.3,233.0z" fill="#d6dbe0"/><path d="M195.5,239.8 L199.1,249.3 L202.6,236.8 L199.1,227.9z" fill="#c2a996"/><path d="M199.9,250.4 L207.2,259.0 L210.2,246.0 L203.3,238.0z" fill="#b89e8c"/><path d="M208.4,260.1 L219.1,267.2 L221.4,253.8 L211.4,247.1z" fill="#fbfcfd"/><path d="M220.6,268.1 L233.8,273.4 L235.4,259.7 L223.0,254.7z" fill="#b5c3cc"/><path d="M235.7,274.0 L250.6,277.1 L251.3,263.2 L237.3,260.2z" fill="#eceef1"/><path d="M252.6,277.4 L268.3,278.1 L268.2,264.2 L253.4,263.5z" fill="#ffffff"/><path d="M271.6,262.1 L287.4,260.1 L285.0,245.3 L271.1,247.1z" fill="#95a3ac"/><path d="M289.3,259.6 L303.6,255.1 L299.5,240.8 L286.9,244.9z" fill="#c2a996"/><path d="M305.3,254.3 L317.1,247.6 L311.6,234.1 L301.2,240.1z" fill="#b5c3cc"/><path d="M318.4,246.6 L326.8,238.1 L320.3,225.7 L312.9,233.2z" fill="#b5c3cc"/><path d="M327.6,236.9 L331.9,227.4 L324.9,216.1 L321.1,224.5z" fill="#cdd5db"/><path d="M332.2,226.1 L332.2,216.2 L325.2,206.1 L325.2,214.9z" fill="#dde6ec"/><path d="M201.5,210.7 L199.3,220.5 L206.4,209.9 L208.3,201.2z" fill="#e2e5e9"/><path d="M199.3,221.8 L201.5,231.6 L208.3,219.8 L206.4,211.1z" fill="#c3cdd4"/><path d="M202.1,232.8 L208.5,242.0 L214.6,229.0 L208.9,221.0z" fill="#f0f2f4"/><path d="M209.6,243.0 L219.7,250.7 L224.6,236.9 L215.6,230.1z" fill="#9a7b68"/><path d="M221.2,251.6 L234.4,257.3 L237.7,242.8 L226.1,237.7z" fill="#f6f7f9"/><path d="M236.2,257.9 L251.4,261.2 L252.9,246.3 L239.5,243.4z" fill="#b89e8c"/><path d="M253.4,261.5 L269.5,262.2 L269.1,247.1 L254.9,246.6z" fill="#a88a77"/><path d="M273.2,244.8 L289.8,242.0 L285.5,227.3 L272.2,229.6z" fill="#7d6255"/><path d="M291.7,241.5 L305.8,235.5 L298.8,222.0 L287.4,226.8z" fill="#9a7b68"/><path d="M307.3,234.6 L317.5,226.1 L308.5,214.2 L300.3,221.1z" fill="#eceef1"/><path d="M318.5,224.9 L323.7,214.9 L313.6,205.0 L309.5,213.1z" fill="#fbfcfd"/><path d="M324.0,213.6 L323.5,203.0 L313.6,195.2 L313.9,203.7z" fill="#ffffff"/><path d="M323.2,201.8 L317.2,191.9 L308.4,185.9 L313.2,193.9z" fill="#cdd5db"/><path d="M210.0,198.9 L207.6,209.4 L217.7,200.2 L219.7,191.8z" fill="#8a6f60"/><path d="M207.7,210.6 L210.9,221.0 L220.4,209.9 L217.8,201.5z" fill="#e2e5e9"/><path d="M211.6,222.2 L220.1,231.4 L228.0,218.4 L221.1,211.1z" fill="#f6f7f9"/><path d="M221.4,232.4 L234.3,239.4 L239.7,225.1 L229.3,219.4z" fill="#d3c2b5"/><path d="M236.1,240.0 L252.0,244.1 L254.2,229.0 L241.5,225.7z" fill="#d3c2b5"/><path d="M254.0,244.3 L271.2,245.0 L270.1,229.8 L256.3,229.3z" fill="#b89e8c"/><path d="M278.9,226.7 L294.5,221.8 L286.6,209.0 L275.7,212.4z" fill="#b5c3cc"/><path d="M296.0,221.1 L307.1,212.7 L295.9,202.4 L288.1,208.2z" fill="#eceef1"/><path d="M308.0,211.7 L312.5,201.3 L300.0,194.0 L296.8,201.3z" fill="#d3c2b5"/><path d="M312.7,200.1 L310.0,189.4 L298.2,185.3 L300.1,192.8z" fill="#b5c3cc"/><path d="M309.3,188.3 L299.8,179.3 L290.9,177.9 L297.5,184.2z" fill="#c3cdd4"/><path d="M244.1,173.7 L230.5,180.4 L240.2,178.5 L249.7,173.8z" fill="#dde6ec"/><path d="M229.2,181.4 L221.2,190.9 L233.3,186.1 L238.9,179.4z" fill="#a88a77"/><path d="M220.7,192.1 L219.7,202.9 L232.1,194.8 L232.8,187.3z" fill="#cdd5db"/><path d="M220.0,204.1 L226.2,214.1 L236.8,203.1 L232.4,196.0z" fill="#f0f2f4"/><path d="M227.3,215.1 L239.6,222.8 L246.5,209.5 L237.9,204.1z" fill="#8a6f60"/><path d="M241.3,223.4 L257.6,227.3 L259.6,212.9 L248.1,210.1z" fill="#c2a996"/><path d="M259.5,227.5 L277.0,227.0 L273.7,212.7 L261.5,213.1z" fill="#c2a996"/><path d="M271.2,211.0 L289.0,205.3 L278.5,195.1 L269.3,198.0z" fill="#ffffff"/><path d="M290.4,204.4 L298.1,192.9 L283.8,188.3 L279.8,194.2z" fill="#e2e5e9"/><path d="M298.1,191.7 L292.1,179.9 L280.7,181.0 L283.9,187.1z" fill="#fbfcfd"/><path d="M290.9,178.9 L273.9,172.3 L270.8,176.6 L279.6,180.0z" fill="#e2e5e9"/><path d="M272.0,172.0 L252.0,173.7 L258.6,177.2 L268.9,176.3z" fill="#e2e5e9"/><path d="M250.3,174.2 L236.7,183.4 L249.9,182.4 L256.9,177.7z" fill="#eceef1"/><path d="M235.9,184.5 L235.1,196.9 L248.7,189.9 L249.1,183.6z" fill="#cdd5db"/><path d="M235.7,198.0 L247.9,207.8 L255.6,196.2 L249.3,191.1z" fill="#f6f7f9"/><path d="M249.6,208.5 L269.2,211.2 L267.4,198.2 L257.2,196.8z" fill="#cdd5db"/><path d="M277.7,193.2 L277.2,180.0 L266.7,185.3 L266.7,185.3z" fill="#d6dbe0"/><path d="M276.4,179.6 L255.0,179.9 L266.0,184.9 L266.0,184.9z" fill="#ffffff"/><path d="M254.3,180.4 L254.8,193.6 L265.3,185.4 L265.3,185.4z" fill="#cdd5db"/><path d="M255.6,194.0 L277.0,193.7 L266.0,185.8 L266.0,185.8z" fill="#d6dbe0"/><circle cx="266" cy="242" r="70.5" fill="none" stroke="#c9d3d9" stroke-width="3" opacity=".55"/><circle cx="-16" cy="282" r="66" fill="#aeb2ba" opacity=".6"/><circle cx="-18" cy="278" r="64" fill="#a7b3ba"/><path d="M-10.2,341.2 L1.5,338.7 L5.7,335.6 L-8.7,338.6z" fill="#f6f7f9"/><path d="M-37.7,338.7 L-26.1,341.1 L-27.6,338.6 L-42.0,335.5z" fill="#eceef1"/><path d="M-24.3,341.3 L-12.0,341.4 L-10.5,338.8 L-25.8,338.8z" fill="#f0f2f4"/><path d="M-14.5,338.6 L-2.1,337.1 L-0.1,331.3 L-14.2,333.0z" fill="#d6dbe0"/><path d="M-0.4,336.8 L10.9,333.3 L14.5,327.1 L1.6,331.0z" fill="#e2e5e9"/><path d="M12.5,332.7 L21.8,327.5 L26.7,320.5 L16.0,326.4z" fill="#95a3ac"/><path d="M-54.3,329.8 L-44.1,334.4 L-47.1,328.3 L-58.7,323.1z" fill="#eceef1"/><path d="M-42.5,334.9 L-30.7,337.7 L-32.1,332.0 L-45.5,328.9z" fill="#c3cdd4"/><path d="M-28.9,337.9 L-16.3,338.6 L-16.0,333.0 L-30.3,332.2z" fill="#d6dbe0"/><path d="M-8.7,331.6 L4.1,329.5 L5.3,321.0 L-8.2,323.2z" fill="#f0f2f4"/><path d="M5.8,329.1 L17.2,325.0 L19.2,316.3 L7.0,320.5z" fill="#cdd5db"/><path d="M18.7,324.4 L28.2,318.7 L30.7,309.6 L20.6,315.6z" fill="#d6dbe0"/><path d="M29.3,317.8 L36.2,310.9 L39.2,301.3 L31.9,308.7z" fill="#dde6ec"/><path d="M-71.4,311.9 L-64.2,318.7 L-66.7,309.6 L-74.4,302.4z" fill="#eceef1"/><path d="M-63.0,319.6 L-53.3,325.0 L-55.1,316.3 L-65.5,310.5z" fill="#dde6ec"/><path d="M-51.7,325.7 L-40.1,329.5 L-41.2,321.0 L-53.6,316.9z" fill="#eceef1"/><path d="M-38.4,329.9 L-25.5,331.8 L-25.9,323.4 L-39.5,321.4z" fill="#f0f2f4"/><path d="M-23.7,331.9 L-10.5,331.8 L-10.0,323.4 L-24.1,323.5z" fill="#d6dbe0"/><path d="M-14.8,322.4 L-1.5,321.1 L-1.5,310.4 L-14.8,311.7z" fill="#dde6ec"/><path d="M0.2,320.8 L12.6,317.5 L12.6,306.8 L0.2,310.1z" fill="#c3cdd4"/><path d="M14.2,317.0 L25.0,312.0 L25.0,301.3 L14.2,306.3z" fill="#c3cdd4"/><path d="M26.4,311.3 L34.9,304.9 L34.9,294.2 L26.4,300.6z" fill="#dde6ec"/><path d="M35.9,303.9 L41.8,296.4 L41.8,285.7 L35.9,293.2z" fill="#cdd5db"/><path d="M42.4,295.4 L45.1,287.2 L45.1,276.5 L42.4,284.7z" fill="#b5c3cc"/><path d="M-80.5,290.0 L-76.8,298.0 L-76.8,287.3 L-80.5,279.3z" fill="#ffffff"/><path d="M-76.1,299.0 L-69.4,306.2 L-69.4,295.5 L-76.1,288.3z" fill="#d6dbe0"/><path d="M-68.3,307.1 L-59.1,313.1 L-59.1,302.4 L-68.3,296.4z" fill="#6d7b84"/><path d="M-57.6,313.8 L-46.3,318.3 L-46.3,307.6 L-57.6,303.1z" fill="#b5c3cc"/><path d="M-44.6,318.8 L-31.9,321.5 L-31.9,310.8 L-44.6,308.1z" fill="#f6f7f9"/><path d="M-30.1,321.7 L-16.7,322.4 L-16.7,311.7 L-30.1,311.0z" fill="#ffffff"/><path d="M-11.1,309.9 L2.5,308.0 L1.4,295.7 L-11.4,297.5z" fill="#ffffff"/><path d="M4.3,307.6 L16.8,303.7 L14.9,291.7 L3.2,295.4z" fill="#dde6ec"/><path d="M18.3,303.1 L28.8,297.4 L26.4,285.7 L16.5,291.0z" fill="#d3c2b5"/><path d="M30.0,296.5 L37.9,289.4 L35.0,278.1 L27.6,284.8z" fill="#9a7b68"/><path d="M38.7,288.4 L43.5,280.3 L40.3,269.4 L35.8,277.1z" fill="#f0f2f4"/><path d="M43.9,279.1 L45.2,270.6 L41.9,260.2 L40.7,268.3z" fill="#f0f2f4"/><path d="M-81.0,268.1 L-80.6,276.7 L-77.4,266.0 L-77.8,257.9z" fill="#f6f7f9"/><path d="M-80.3,277.9 L-76.4,286.1 L-73.4,275.0 L-77.1,267.2z" fill="#eceef1"/><path d="M-75.6,287.2 L-68.5,294.6 L-65.9,283.0 L-72.7,276.0z" fill="#f0f2f4"/><path d="M-67.4,295.5 L-57.5,301.6 L-55.5,289.6 L-64.8,283.9z" fill="#f6f7f9"/><path d="M-56.0,302.3 L-43.9,306.7 L-42.7,294.5 L-54.0,290.3z" fill="#ffffff"/><path d="M-42.3,307.1 L-28.8,309.6 L-28.3,297.2 L-41.0,294.9z" fill="#c3cdd4"/><path d="M-27.0,309.7 L-13.0,310.0 L-13.3,297.6 L-26.5,297.4z" fill="#eceef1"/><path d="M-1.1,294.5 L12.0,290.9 L8.7,278.2 L-2.8,281.3z" fill="#d6dbe0"/><path d="M13.6,290.4 L24.7,284.8 L20.1,272.7 L10.3,277.6z" fill="#fbfcfd"/><path d="M25.9,284.0 L34.2,276.8 L28.6,265.5 L21.3,271.9z" fill="#ffffff"/><path d="M35.1,275.8 L39.9,267.4 L33.7,257.2 L29.5,264.5z" fill="#7d6255"/><path d="M40.2,266.4 L41.2,257.5 L34.9,248.3 L34.1,256.1z" fill="#b5c3cc"/><path d="M-77.2,257.5 L-76.2,266.3 L-70.1,256.1 L-70.9,248.3z" fill="#cdd5db"/><path d="M-75.9,267.4 L-71.1,275.8 L-65.5,264.5 L-69.7,257.2z" fill="#fbfcfd"/><path d="M-70.2,276.8 L-62.0,284.0 L-57.3,271.8 L-64.6,265.5z" fill="#fbfcfd"/><path d="M-60.7,284.8 L-49.6,290.4 L-46.3,277.6 L-56.1,272.7z" fill="#f0f2f4"/><path d="M-48.0,290.9 L-34.9,294.5 L-33.2,281.3 L-44.8,278.2z" fill="#f6f7f9"/><path d="M-33.1,294.8 L-18.9,296.0 L-18.9,282.6 L-31.4,281.6z" fill="#8a6f60"/><path d="M-17.1,296.0 L-2.9,294.8 L-4.6,281.6 L-17.1,282.6z" fill="#eceef1"/><path d="M-3.9,279.6 L10.0,275.7 L5.0,263.1 L-6.2,266.2z" fill="#b89e8c"/><path d="M11.5,275.1 L22.7,268.7 L15.5,257.3 L6.5,262.5z" fill="#7f8d96"/><path d="M23.8,267.8 L30.9,259.5 L22.4,249.7 L16.6,256.4z" fill="#a88a77"/><path d="M31.5,258.4 L33.9,249.1 L24.9,241.1 L23.0,248.6z" fill="#f0f2f4"/><path d="M33.9,248.0 L31.3,238.7 L22.8,232.5 L24.9,240.0z" fill="#ffffff"/><path d="M-64.3,234.3 L-69.1,243.3 L-60.2,236.1 L-56.3,228.9z" fill="#dde6ec"/><path d="M-69.4,244.4 L-69.3,253.8 L-60.4,244.8 L-60.5,237.2z" fill="#fbfcfd"/><path d="M-69.0,254.9 L-63.9,263.8 L-56.0,253.1 L-60.1,245.9z" fill="#c3cdd4"/><path d="M-63.0,264.8 L-53.5,272.1 L-47.5,260.0 L-55.1,254.1z" fill="#c3cdd4"/><path d="M-52.1,272.9 L-39.3,278.0 L-35.7,264.8 L-46.1,260.8z" fill="#eceef1"/><path d="M-37.6,278.4 L-22.8,280.6 L-22.1,267.1 L-34.0,265.3z" fill="#7f8d96"/><path d="M-20.9,280.7 L-5.7,279.9 L-8.0,266.5 L-20.2,267.2z" fill="#ffffff"/><path d="M-14.4,265.3 L0.5,262.7 L-4.7,250.5 L-15.1,252.3z" fill="#7f8d96"/><path d="M2.1,262.2 L14.0,256.1 L5.3,245.7 L-3.1,250.0z" fill="#c3cdd4"/><path d="M15.1,255.2 L22.0,246.6 L11.2,238.9 L6.4,244.9z" fill="#f6f7f9"/><path d="M22.4,245.6 L23.0,236.0 L12.0,231.1 L11.6,237.8z" fill="#d6dbe0"/><path d="M22.7,235.0 L17.0,226.1 L7.7,223.8 L11.7,230.1z" fill="#ffffff"/><path d="M16.0,225.2 L4.9,218.5 L-1.1,218.3 L6.7,222.9z" fill="#b5c3cc"/><path d="M-45.2,220.5 L-54.8,228.1 L-44.8,225.0 L-38.1,219.8z" fill="#e2e5e9"/><path d="M-55.6,229.0 L-59.4,238.3 L-48.3,232.5 L-45.6,226.0z" fill="#eceef1"/><path d="M-59.5,239.4 L-56.9,248.8 L-46.5,240.2 L-48.3,233.6z" fill="#dde6ec"/><path d="M-56.2,249.8 L-47.6,257.8 L-39.8,246.8 L-45.8,241.2z" fill="#ffffff"/><path d="M-46.3,258.5 L-33.2,263.6 L-29.3,251.1 L-38.5,247.5z" fill="#b5c3cc"/><path d="M-31.5,264.0 L-16.2,265.4 L-16.9,252.4 L-27.7,251.5z" fill="#f6f7f9"/><path d="M-11.0,250.1 L4.1,244.2 L-6.0,235.7 L-13.7,238.7z" fill="#e2e5e9"/><path d="M5.2,243.4 L10.6,232.9 L-2.1,229.4 L-4.9,234.8z" fill="#f0f2f4"/><path d="M10.5,231.8 L3.7,221.6 L-5.7,223.1 L-2.2,228.3z" fill="#d6dbe0"/><path d="M2.5,220.8 L-13.4,215.7 L-15.1,219.7 L-6.9,222.3z" fill="#f0f2f4"/><path d="M-15.1,215.6 L-32.6,218.0 L-25.8,220.8 L-16.8,219.5z" fill="#f0f2f4"/><path d="M-34.1,218.5 L-45.0,227.3 L-32.9,225.8 L-27.2,221.3z" fill="#d6dbe0"/><path d="M-45.5,228.3 L-44.7,239.3 L-33.0,232.5 L-33.4,226.9z" fill="#fbfcfd"/><path d="M-44.1,240.3 L-32.0,248.4 L-26.1,237.7 L-32.3,233.5z" fill="#f0f2f4"/><path d="M-30.4,248.9 L-12.7,250.4 L-15.4,238.9 L-24.6,238.2z" fill="#eceef1"/><path d="M-17.4,237.5 L-4.1,229.1 L-17.5,227.9 L-17.5,227.9z" fill="#d6dbe0"/><path d="M-4.1,228.6 L-17.7,220.4 L-17.5,227.4 L-17.5,227.4z" fill="#f0f2f4"/><path d="M-18.6,220.4 L-31.9,228.8 L-18.5,227.4 L-18.5,227.4z" fill="#d6dbe0"/><path d="M-31.9,229.3 L-18.3,237.5 L-18.5,227.9 L-18.5,227.9z" fill="#f6f7f9"/><circle cx="-18" cy="278" r="62.5" fill="none" stroke="#c9d3d9" stroke-width="3" opacity=".55"/><circle cx="90" cy="416" r="76" fill="#aeb2ba" opacity=".6"/><circle cx="88" cy="412" r="74" fill="#a7b3ba"/><path d="M69.1,483.3 L82.9,485.4 L82.1,482.5 L64.9,479.9z" fill="#cdd5db"/><path d="M85.0,485.5 L99.2,484.8 L101.8,481.7 L84.2,482.6z" fill="#ffffff"/><path d="M99.8,481.4 L113.7,478.6 L116.9,471.7 L101.1,474.9z" fill="#dde6ec"/><path d="M115.6,478.1 L127.7,473.1 L132.6,465.5 L118.8,471.1z" fill="#d6dbe0"/><path d="M129.3,472.2 L138.8,465.4 L145.0,456.9 L134.2,464.6z" fill="#f0f2f4"/><path d="M40.1,467.9 L50.4,474.2 L46.1,466.8 L34.3,459.6z" fill="#cdd5db"/><path d="M52.1,475.0 L64.9,479.3 L62.3,472.5 L47.8,467.6z" fill="#6d7b84"/><path d="M66.9,479.8 L81.1,481.9 L80.4,475.4 L64.2,473.0z" fill="#c3cdd4"/><path d="M83.2,482.0 L97.7,481.6 L99.0,475.1 L82.5,475.5z" fill="#f6f7f9"/><path d="M99.8,473.9 L114.4,471.3 L115.9,461.4 L100.3,464.2z" fill="#c3cdd4"/><path d="M116.4,470.8 L129.5,466.0 L131.8,455.8 L117.9,460.9z" fill="#d3c2b5"/><path d="M131.2,465.2 L142.0,458.6 L145.0,448.0 L133.5,455.0z" fill="#b5c3cc"/><path d="M143.3,457.6 L151.1,449.5 L154.6,438.4 L146.3,447.0z" fill="#eceef1"/><path d="M26.7,451.7 L35.2,459.5 L32.4,449.0 L23.3,440.8z" fill="#b5c3cc"/><path d="M36.6,460.5 L48.0,466.7 L45.9,456.6 L33.8,450.0z" fill="#fbfcfd"/><path d="M49.8,467.5 L63.4,471.8 L62.1,461.9 L47.7,457.4z" fill="#fbfcfd"/><path d="M65.4,472.2 L80.3,474.3 L79.9,464.6 L64.1,462.4z" fill="#eceef1"/><path d="M82.4,474.4 L97.7,474.1 L98.2,464.4 L82.0,464.7z" fill="#f0f2f4"/><path d="M100.8,462.6 L115.8,460.0 L115.8,447.6 L100.8,450.3z" fill="#eceef1"/><path d="M117.7,459.5 L131.2,454.7 L131.2,442.3 L117.7,447.1z" fill="#b5c3cc"/><path d="M132.9,453.9 L144.1,447.2 L144.1,434.9 L132.9,441.5z" fill="#d6dbe0"/><path d="M145.5,446.2 L153.8,438.1 L153.8,425.8 L145.5,433.9z" fill="#e2e5e9"/><path d="M154.7,437.0 L159.6,427.9 L159.6,415.5 L154.7,424.6z" fill="#cdd5db"/><path d="M17.9,431.4 L24.0,440.2 L24.0,427.8 L17.9,419.0z" fill="#6d7b84"/><path d="M25.0,441.3 L34.4,449.0 L34.4,436.6 L25.0,428.9z" fill="#fbfcfd"/><path d="M35.8,449.9 L47.9,456.0 L47.9,443.6 L35.8,437.6z" fill="#ffffff"/><path d="M49.7,456.7 L63.8,460.8 L63.8,448.4 L49.7,444.3z" fill="#c3cdd4"/><path d="M65.8,461.2 L81.0,463.1 L81.0,450.8 L65.8,448.8z" fill="#dde6ec"/><path d="M83.1,463.2 L98.7,462.9 L98.7,450.5 L83.1,450.9z" fill="#7f8d96"/><path d="M101.0,448.4 L116.5,445.6 L115.0,431.5 L100.3,434.1z" fill="#b5c3cc"/><path d="M118.4,445.1 L132.3,439.9 L130.0,426.1 L116.9,430.9z" fill="#fbfcfd"/><path d="M134.0,439.1 L145.4,432.0 L142.4,418.6 L131.7,425.3z" fill="#fbfcfd"/><path d="M146.7,431.0 L154.8,422.3 L151.4,409.4 L143.7,417.6z" fill="#eceef1"/><path d="M155.7,421.1 L160.1,411.5 L156.4,399.2 L152.2,408.2z" fill="#cdd5db"/><path d="M160.4,410.2 L160.8,400.3 L157.1,388.5 L156.7,397.9z" fill="#f6f7f9"/><path d="M14.9,403.7 L16.6,413.6 L20.2,401.1 L18.7,391.7z" fill="#6d7b84"/><path d="M17.0,414.9 L22.6,424.3 L26.0,411.2 L20.7,402.4z" fill="#ffffff"/><path d="M23.6,425.4 L32.8,433.6 L35.6,420.1 L26.9,412.3z" fill="#7f8d96"/><path d="M34.2,434.6 L46.4,441.2 L48.5,427.2 L37.0,421.1z" fill="#fbfcfd"/><path d="M48.2,441.9 L62.7,446.4 L64.0,432.2 L50.3,428.0z" fill="#e2e5e9"/><path d="M64.7,446.8 L80.5,448.9 L80.9,434.6 L66.0,432.6z" fill="#cdd5db"/><path d="M82.7,449.0 L98.9,448.6 L98.2,434.4 L83.0,434.7z" fill="#f0f2f4"/><path d="M99.6,432.2 L115.5,429.2 L112.5,414.2 L98.5,416.8z" fill="#e2e5e9"/><path d="M117.4,428.7 L131.4,423.2 L126.7,408.8 L114.4,413.7z" fill="#f0f2f4"/><path d="M133.0,422.4 L144.1,414.8 L138.1,401.3 L128.3,408.0z" fill="#e2e5e9"/><path d="M145.3,413.7 L152.7,404.6 L145.8,392.2 L139.3,400.3z" fill="#c3cdd4"/><path d="M153.3,403.4 L156.4,393.3 L149.1,382.1 L146.4,391.0z" fill="#e2e5e9"/><path d="M156.5,392.0 L155.1,381.9 L148.0,371.9 L149.2,380.8z" fill="#f0f2f4"/><path d="M20.4,383.4 L19.6,393.6 L26.9,382.2 L27.6,373.3z" fill="#cdd5db"/><path d="M19.8,394.9 L23.5,404.8 L30.3,392.3 L27.1,383.5z" fill="#cdd5db"/><path d="M24.2,406.1 L32.1,415.0 L38.0,401.4 L31.0,393.5z" fill="#e2e5e9"/><path d="M33.4,416.1 L44.9,423.4 L49.4,408.9 L39.2,402.5z" fill="#cdd5db"/><path d="M46.6,424.2 L60.9,429.3 L63.7,414.2 L51.1,409.7z" fill="#cdd5db"/><path d="M62.8,429.8 L78.9,432.4 L79.7,417.0 L65.6,414.7z" fill="#cdd5db"/><path d="M81.0,432.6 L97.6,432.4 L96.4,417.0 L81.8,417.1z" fill="#e2e5e9"/><path d="M106.1,413.5 L122.0,408.7 L115.9,394.2 L103.2,398.1z" fill="#7d6255"/><path d="M123.7,407.9 L136.2,400.3 L127.7,387.3 L117.7,393.5z" fill="#eceef1"/><path d="M137.5,399.2 L145.2,389.4 L135.2,378.3 L129.0,386.2z" fill="#c3cdd4"/><path d="M145.8,388.2 L148.0,377.4 L137.6,368.4 L135.8,377.1z" fill="#dde6ec"/><path d="M147.9,376.1 L144.3,365.4 L134.6,358.5 L137.5,367.1z" fill="#f6f7f9"/><path d="M33.6,362.6 L28.6,373.0 L38.9,364.5 L43.0,356.2z" fill="#b5c3cc"/><path d="M28.3,374.3 L29.0,385.2 L39.2,374.6 L38.6,365.8z" fill="#fbfcfd"/><path d="M29.5,386.5 L35.9,396.6 L44.8,384.0 L39.7,375.9z" fill="#d6dbe0"/><path d="M37.0,397.7 L48.4,406.0 L55.1,391.9 L45.9,385.2z" fill="#dde6ec"/><path d="M50.0,406.9 L65.2,412.4 L69.0,397.2 L56.7,392.7z" fill="#eceef1"/><path d="M67.2,412.9 L84.4,415.1 L84.9,399.5 L70.9,397.7z" fill="#b5c3cc"/><path d="M86.6,415.2 L104.1,413.8 L101.1,398.4 L87.0,399.5z" fill="#f6f7f9"/><path d="M91.1,397.4 L108.5,394.6 L102.7,380.4 L90.5,382.4z" fill="#a88a77"/><path d="M110.3,394.0 L124.3,387.2 L114.4,375.1 L104.5,379.9z" fill="#c2a996"/><path d="M125.6,386.2 L133.9,376.4 L121.5,367.2 L115.7,374.1z" fill="#7d6255"/><path d="M134.5,375.2 L135.6,364.2 L122.8,358.3 L122.0,366.0z" fill="#d3c2b5"/><path d="M135.3,362.9 L129.0,352.6 L118.1,349.8 L122.5,357.1z" fill="#ffffff"/><path d="M127.9,351.5 L115.4,343.6 L108.2,343.2 L117.0,348.7z" fill="#b5c3cc"/><path d="M57.4,345.1 L45.9,353.7 L57.4,350.3 L65.4,344.3z" fill="#c3cdd4"/><path d="M45.0,354.8 L40.2,365.4 L53.1,358.9 L56.5,351.4z" fill="#b5c3cc"/><path d="M40.1,366.7 L42.7,377.6 L54.8,367.8 L53.0,360.1z" fill="#b89e8c"/><path d="M43.4,378.8 L53.0,388.1 L62.3,375.5 L55.5,369.0z" fill="#d6dbe0"/><path d="M54.5,389.0 L69.4,395.1 L74.2,380.7 L63.7,376.4z" fill="#e2e5e9"/><path d="M71.3,395.6 L89.0,397.4 L88.5,382.4 L76.1,381.1z" fill="#a88a77"/><path d="M104.3,377.8 L118.2,368.3 L104.6,360.5 L97.4,365.4z" fill="#eceef1"/><path d="M118.9,367.2 L119.8,354.5 L105.8,352.8 L105.4,359.4z" fill="#cdd5db"/><path d="M119.1,353.3 L106.5,343.2 L98.6,346.5 L105.2,351.7z" fill="#d6dbe0"/><path d="M104.8,342.5 L84.5,339.8 L86.5,344.4 L96.9,345.8z" fill="#e2e5e9"/><path d="M82.6,340.0 L64.2,345.9 L75.1,347.6 L84.5,344.6z" fill="#e2e5e9"/><path d="M62.9,346.9 L55.0,358.6 L69.7,354.6 L73.7,348.5z" fill="#f6f7f9"/><path d="M55.0,359.9 L61.3,372.0 L72.9,362.1 L69.6,355.9z" fill="#f0f2f4"/><path d="M62.5,373.0 L80.0,379.8 L83.1,366.6 L74.1,363.1z" fill="#eceef1"/><path d="M82.0,380.1 L102.5,378.3 L95.6,366.0 L85.1,366.8z" fill="#e2e5e9"/><path d="M104.1,355.6 L89.6,345.4 L88.6,353.5 L88.6,353.5z" fill="#eceef1"/><path d="M88.5,345.4 L72.0,354.3 L87.5,353.4 L87.5,353.4z" fill="#cdd5db"/><path d="M71.9,355.0 L86.4,365.2 L87.4,354.1 L87.4,354.1z" fill="#f6f7f9"/><path d="M87.5,365.2 L104.0,356.2 L88.5,354.1 L88.5,354.1z" fill="#e2e5e9"/><circle cx="88" cy="412" r="72.5" fill="none" stroke="#c9d3d9" stroke-width="3" opacity=".55"/><circle cx="234" cy="398" r="76" fill="#aeb2ba" opacity=".6"/><circle cx="232" cy="394" r="74" fill="#a7b3ba"/><path d="M242.5,466.9 L255.8,463.8 L261.0,460.1 L244.5,463.9z" fill="#f6f7f9"/><path d="M210.5,464.5 L224.1,467.2 L222.6,464.3 L205.8,461.0z" fill="#d6dbe0"/><path d="M226.2,467.4 L240.4,467.1 L242.4,464.2 L224.8,464.4z" fill="#ffffff"/><path d="M238.9,463.9 L253.1,461.8 L255.7,455.0 L239.6,457.4z" fill="#d6dbe0"/><path d="M255.1,461.3 L267.8,457.0 L272.2,449.6 L257.7,454.6z" fill="#c3cdd4"/><path d="M269.5,456.2 L279.9,449.9 L285.7,441.7 L273.9,448.8z" fill="#f0f2f4"/><path d="M181.1,447.4 L190.6,454.2 L185.8,446.6 L175.0,438.9z" fill="#ffffff"/><path d="M192.2,455.1 L204.4,460.0 L201.2,453.1 L187.4,447.5z" fill="#cdd5db"/><path d="M206.3,460.6 L220.2,463.4 L218.9,456.9 L203.1,453.7z" fill="#f0f2f4"/><path d="M222.2,463.6 L236.8,464.0 L237.5,457.5 L220.9,457.1z" fill="#dde6ec"/><path d="M237.6,456.4 L252.6,454.6 L253.7,444.8 L237.8,446.7z" fill="#f6f7f9"/><path d="M254.6,454.2 L268.4,450.2 L270.4,440.1 L255.8,444.4z" fill="#cdd5db"/><path d="M270.2,449.5 L281.9,443.5 L284.7,433.0 L272.2,439.4z" fill="#d6dbe0"/><path d="M283.4,442.5 L292.3,434.9 L295.6,424.0 L286.1,432.1z" fill="#c3cdd4"/><path d="M168.0,430.3 L175.4,438.5 L172.4,427.9 L164.5,419.1z" fill="#c3cdd4"/><path d="M176.7,439.6 L187.1,446.4 L184.7,436.2 L173.6,428.9z" fill="#ffffff"/><path d="M188.8,447.2 L201.7,452.2 L200.1,442.3 L186.4,437.0z" fill="#b5c3cc"/><path d="M203.6,452.8 L218.1,455.7 L217.4,445.9 L202.0,442.9z" fill="#ffffff"/><path d="M220.2,455.9 L235.5,456.5 L235.7,446.8 L219.5,446.2z" fill="#b5c3cc"/><path d="M246.8,444.4 L261.7,441.5 L261.7,429.1 L246.8,432.0z" fill="#ffffff"/><path d="M263.6,440.9 L276.8,435.9 L276.8,423.5 L263.6,428.6z" fill="#eceef1"/><path d="M278.5,435.1 L289.4,428.3 L289.4,415.9 L278.5,422.7z" fill="#f6f7f9"/><path d="M290.7,427.2 L298.7,419.0 L298.7,406.6 L290.7,414.9z" fill="#7f8d96"/><path d="M299.5,417.8 L304.1,408.6 L304.1,396.2 L299.5,405.4z" fill="#eceef1"/><path d="M162.5,414.6 L169.0,423.3 L169.0,410.9 L162.5,402.2z" fill="#d6dbe0"/><path d="M170.1,424.4 L179.8,431.9 L179.8,419.5 L170.1,412.0z" fill="#e2e5e9"/><path d="M181.3,432.8 L193.6,438.7 L193.6,426.3 L181.3,420.4z" fill="#f6f7f9"/><path d="M195.5,439.3 L209.7,443.2 L209.7,430.8 L195.5,427.0z" fill="#b5c3cc"/><path d="M211.7,443.6 L227.1,445.2 L227.1,432.9 L211.7,431.2z" fill="#b5c3cc"/><path d="M229.2,445.3 L244.7,444.7 L244.7,432.3 L229.2,432.9z" fill="#eceef1"/><path d="M249.8,429.8 L265.0,426.3 L263.3,412.2 L249.0,415.5z" fill="#e2e5e9"/><path d="M266.9,425.7 L280.2,420.0 L277.7,406.2 L265.2,411.6z" fill="#eceef1"/><path d="M281.8,419.1 L292.3,411.5 L289.2,398.2 L279.3,405.4z" fill="#eceef1"/><path d="M293.5,410.4 L300.7,401.5 L297.1,388.7 L290.4,397.1z" fill="#dde6ec"/><path d="M301.4,400.3 L304.7,390.5 L301.0,378.3 L297.8,387.5z" fill="#cdd5db"/><path d="M159.0,388.8 L161.8,398.6 L165.4,385.9 L162.8,376.7z" fill="#d6dbe0"/><path d="M162.4,399.9 L169.0,409.0 L172.2,395.8 L166.0,387.2z" fill="#c2a996"/><path d="M170.1,410.1 L180.2,417.9 L182.8,404.2 L173.3,396.9z" fill="#b5c3cc"/><path d="M181.7,418.8 L194.7,424.8 L196.5,410.8 L184.4,405.1z" fill="#f0f2f4"/><path d="M196.5,425.5 L211.5,429.3 L212.5,415.1 L198.4,411.5z" fill="#fbfcfd"/><path d="M213.5,429.7 L229.5,431.1 L229.6,416.8 L214.5,415.4z" fill="#fbfcfd"/><path d="M231.7,431.1 L247.8,430.1 L246.9,415.8 L231.7,416.8z" fill="#fbfcfd"/><path d="M241.7,414.4 L257.7,411.7 L254.9,396.6 L240.8,398.9z" fill="#8a6f60"/><path d="M259.7,411.2 L273.9,406.0 L269.4,391.5 L256.8,396.1z" fill="#95a3ac"/><path d="M275.6,405.2 L287.0,397.8 L281.1,384.2 L271.0,390.7z" fill="#7f8d96"/><path d="M288.2,396.7 L296.0,387.7 L289.2,375.2 L282.3,383.1z" fill="#8a6f60"/><path d="M296.7,386.5 L300.3,376.5 L293.0,365.2 L289.9,374.0z" fill="#f6f7f9"/><path d="M300.4,375.2 L299.4,365.0 L292.3,354.9 L293.1,363.9z" fill="#fbfcfd"/><path d="M164.8,364.2 L163.5,374.4 L170.8,363.2 L171.9,354.2z" fill="#7f8d96"/><path d="M163.6,375.7 L166.8,385.7 L173.7,373.3 L170.9,364.5z" fill="#6d7b84"/><path d="M167.5,386.9 L175.0,396.0 L181.0,382.5 L174.4,374.5z" fill="#dde6ec"/><path d="M176.2,397.1 L187.4,404.6 L192.1,390.2 L182.2,383.6z" fill="#cdd5db"/><path d="M189.0,405.5 L203.1,410.9 L206.1,395.8 L193.7,391.1z" fill="#f0f2f4"/><path d="M205.1,411.4 L221.0,414.2 L222.0,398.8 L208.0,396.3z" fill="#b89e8c"/><path d="M223.1,414.4 L239.6,414.5 L238.7,399.1 L224.1,399.0z" fill="#c3cdd4"/><path d="M244.6,396.4 L261.1,392.5 L255.9,377.7 L242.6,380.8z" fill="#8a6f60"/><path d="M263.0,391.9 L276.6,385.0 L268.7,371.5 L257.8,377.1z" fill="#b89e8c"/><path d="M278.0,384.0 L287.2,374.7 L277.6,363.1 L270.1,370.5z" fill="#e2e5e9"/><path d="M288.0,373.5 L291.9,362.9 L281.5,353.3 L278.4,361.8z" fill="#cdd5db"/><path d="M292.0,361.6 L290.0,350.8 L280.0,343.3 L281.6,352.0z" fill="#f0f2f4"/><path d="M180.3,341.5 L173.7,351.6 L183.8,343.7 L189.2,335.6z" fill="#e2e5e9"/><path d="M173.2,352.8 L172.2,363.7 L182.6,353.7 L183.4,345.0z" fill="#b5c3cc"/><path d="M172.5,365.0 L177.3,375.5 L186.7,363.5 L182.8,355.0z" fill="#d3c2b5"/><path d="M178.2,376.6 L188.3,385.6 L195.7,371.8 L187.6,364.6z" fill="#8a6f60"/><path d="M189.8,386.5 L204.0,392.9 L208.7,378.0 L197.2,372.8z" fill="#c3cdd4"/><path d="M205.9,393.5 L222.8,396.8 L224.2,381.1 L210.6,378.5z" fill="#b5c3cc"/><path d="M224.9,396.9 L242.5,396.6 L240.5,381.1 L226.3,381.3z" fill="#c2a996"/><path d="M242.9,378.6 L259.3,374.2 L251.8,360.7 L240.3,363.8z" fill="#f6f7f9"/><path d="M261.0,373.4 L273.0,365.2 L261.8,354.2 L253.4,359.9z" fill="#8a6f60"/><path d="M274.0,364.1 L279.6,353.6 L266.8,345.7 L262.9,353.1z" fill="#7f8d96"/><path d="M279.8,352.4 L278.0,341.4 L265.7,336.8 L267.0,344.5z" fill="#fbfcfd"/><path d="M277.3,340.2 L268.4,330.6 L258.8,328.9 L265.0,335.6z" fill="#c2a996"/><path d="M267.0,329.7 L252.5,323.2 L247.2,323.4 L257.4,328.0z" fill="#ffffff"/><path d="M211.6,323.1 L197.1,329.6 L206.7,327.9 L216.8,323.4z" fill="#b5c3cc"/><path d="M195.7,330.6 L186.7,340.1 L199.0,335.6 L205.3,328.9z" fill="#c3cdd4"/><path d="M186.1,341.3 L184.2,352.3 L197.0,344.5 L198.4,336.8z" fill="#a88a77"/><path d="M184.4,353.6 L189.9,364.1 L201.1,353.1 L197.2,345.7z" fill="#cdd5db"/><path d="M190.9,365.2 L202.9,373.4 L210.5,359.9 L202.1,354.2z" fill="#d3c2b5"/><path d="M204.6,374.1 L221.0,378.6 L223.7,363.8 L212.2,360.7z" fill="#c2a996"/><path d="M223.0,378.9 L240.9,378.9 L238.3,364.1 L225.7,364.1z" fill="#fbfcfd"/><path d="M250.4,359.0 L263.1,348.9 L249.2,341.7 L242.6,346.9z" fill="#e2e5e9"/><path d="M263.7,347.7 L263.0,335.0 L249.4,334.0 L249.8,340.6z" fill="#cdd5db"/><path d="M262.2,333.8 L248.3,324.4 L241.5,328.0 L248.6,332.9z" fill="#e2e5e9"/><path d="M246.5,323.8 L226.0,322.1 L229.1,326.5 L239.7,327.4z" fill="#fbfcfd"/><path d="M224.1,322.3 L206.5,329.1 L218.1,330.3 L227.2,326.8z" fill="#d6dbe0"/><path d="M205.3,330.1 L199.0,342.2 L213.6,337.5 L216.9,331.2z" fill="#f6f7f9"/><path d="M199.0,343.4 L206.8,355.2 L217.7,344.8 L213.7,338.7z" fill="#f0f2f4"/><path d="M208.2,356.2 L226.5,362.1 L228.5,348.8 L219.1,345.7z" fill="#ffffff"/><path d="M228.5,362.3 L248.7,359.6 L240.9,347.6 L230.5,349.0z" fill="#eceef1"/><path d="M248.1,337.3 L233.1,327.4 L232.6,335.5 L232.6,335.5z" fill="#cdd5db"/><path d="M232.1,327.4 L215.9,336.6 L231.5,335.4 L231.5,335.4z" fill="#ffffff"/><path d="M215.9,337.2 L230.9,347.2 L231.4,336.1 L231.4,336.1z" fill="#e2e5e9"/><path d="M231.9,347.2 L248.1,338.0 L232.5,336.1 L232.5,336.1z" fill="#cdd5db"/><circle cx="232" cy="394" r="72.5" fill="none" stroke="#c9d3d9" stroke-width="3" opacity=".55"/></svg><!--/BALLS--></div>
<div class="ctext" style="left:55px;color:#151515;-webkit-text-stroke:0.3px #151515">Find your<br>way around</div>
<div class="ctext" style="left:245px;color:#151515;-webkit-text-stroke:0.3px #151515">Edit<br>a design</div>
<div class="ctext" style="left:432px">Get inspired<br>with elements<br>and templates</div>
<div class="ctext" style="left:619px">Work with<br>photos and<br>videos</div>
<div class="ctext" style="left:806px">Collaborate,<br>share and<br>publish</div>
</div>
<div id="sel">
<div class="abs" style="left:1040px;top:409px;width:40px;height:163px;background:linear-gradient(90deg,rgba(60,30,90,.22),rgba(60,30,90,0))"></div>
<div class="abs" style="left:754px;top:219px;width:312px;height:468px;border:2px solid #7d47e6"></div>
<div class="hd" style="left:747px;top:212px"></div>
<div class="hd" style="left:1057px;top:212px"></div>
<div class="hd" style="left:747px;top:678px"></div>
<div class="hd" style="left:1057px;top:678px"></div>
<div class="hh" style="left:899px;top:216px"></div>
<div class="hh" style="left:899px;top:682px"></div>
<div class="hv" style="left:751px;top:441px"></div>
<div class="hv" style="left:1061px;top:441px"></div>
<div class="abs" style="left:843px;top:258px;width:135px;height:49px;border-radius:7px;background:#fff;box-shadow:0 1px 4px rgba(0,0,0,.15)"></div>
<svg class="abs" style="left:855px;top:270px" width="26" height="26" viewBox="0 0 26 26"><path d="M6 19H4a2 2 0 0 1-2-2V4a2 2 0 0 1 2-2h13a2 2 0 0 1 2 2v2" fill="none" stroke="#0d1216" stroke-width="2"/><rect x="7" y="7" width="17" height="17" rx="2" fill="none" stroke="#0d1216" stroke-width="2"/><path d="M15.5 11v9M11 15.5h9" stroke="#0d1216" stroke-width="2"/></svg>
<svg class="abs" style="left:898px;top:269px" width="24" height="26" viewBox="0 0 24 26"><path d="M1 6h22M8 6V3.5A1.5 1.5 0 0 1 9.5 2h5A1.5 1.5 0 0 1 16 3.5V6M4 6l1 16.5A2 2 0 0 0 7 24.5h10a2 2 0 0 0 2-2L20 6M10 10.5v9M14 10.5v9" fill="none" stroke="#0d1216" stroke-width="2"/></svg>
<svg class="abs" style="left:940px;top:278px" width="26" height="8" viewBox="0 0 26 8"><circle cx="3.5" cy="4" r="2.5" fill="#0d1216"/><circle cx="13" cy="4" r="2.5" fill="#0d1216"/><circle cx="22.5" cy="4" r="2.5" fill="#0d1216"/></svg>
<div class="abs" style="left:895px;top:728px;width:30px;height:30px;border-radius:50%;background:#fff;box-shadow:0 1px 4px rgba(0,0,0,.25)"></div>
<svg class="abs" style="left:901px;top:734px" width="18" height="18" viewBox="0 0 18 18"><path d="M14.5 7A6 6 0 0 0 3.8 5M3.5 11a6 6 0 0 0 10.7 2" fill="none" stroke="#0d1216" stroke-width="1.6" stroke-linecap="round"/><path d="M3 1.5v4h4M15 16.5v-4h-4" fill="none" stroke="#0d1216" stroke-width="1.6" stroke-linecap="round" stroke-linejoin="round"/></svg>
</div>
<div id="strip">
<div class="abs" style="left:0;top:0;width:1380px;height:21px;background:#f1f1f1;border-bottom:1px solid #e6e6e6"></div>
<svg class="abs" style="left:7px;top:5px" width="8" height="11" viewBox="0 0 8 11"><path d="M7 1L1 5.5 7 10z" fill="#a3a3a3"/></svg>
<svg class="abs" style="left:1345px;top:5px" width="8" height="11" viewBox="0 0 8 11"><path d="M1 1l6 4.5L1 10z" fill="#a3a3a3"/></svg>
<div class="abs" style="left:1359px;top:0;width:21px;height:21px;background:#dcdcdc"></div>
<svg class="abs" style="left:624px;top:5px" width="126" height="18" viewBox="0 0 126 18"><path d="M3 17.5C20 17.5 24 1.5 40 1.5H86C102 1.5 106 17.5 123 17.5" fill="#fff" stroke="#e2e2e2" stroke-width="1"/><rect x="0" y="17" width="126" height="1" fill="#fff"/></svg>
<svg class="abs" style="left:685px;top:14px" width="11" height="7" viewBox="0 0 11 7"><path d="M1.5 1.5l4 4 4-4" fill="none" stroke="#0d1216" stroke-width="1.5" stroke-linecap="round"/></svg>
<div class="abs" style="left:0;top:127px;width:1380px;height:20px;background:#f1f1f1"></div>
<div class="abs" style="left:21px;top:128px;width:406px;height:17px;background:#c1c1c1"></div>
<svg class="abs" style="left:7px;top:131px" width="8" height="11" viewBox="0 0 8 11"><path d="M7 1L1 5.5 7 10z" fill="#a3a3a3"/></svg>
<svg class="abs" style="left:1364px;top:131px" width="8" height="11" viewBox="0 0 8 11"><path d="M1 1l6 4.5L1 10z" fill="#505050"/></svg>
</div>
<div class="th" style="left:560px;background:linear-gradient(100deg,#d9c6f7 0%,#f4effc 35%,#e6f8fa 70%,#bff0f2 100%);overflow:hidden"><div class="abs" style="left:15px;top:9px;width:113px;height:64px;border:1.5px solid #9a5cf0;border-radius:4px;background:#000"></div>
<div class="abs" style="left:51px;top:18px;width:18px;height:5px;border-radius:3px;background:#a259ff"></div>
<div class="abs" style="left:73px;top:18px;width:17px;height:5px;border-radius:3px;border:1px solid #555"></div>
<div class="abs" style="left:15px;top:31px;width:113px;text-align:center;color:#fff;font-weight:bold;font-size:11.5px;line-height:10px;letter-spacing:-.8px">Your first<br>week in Canva</div>
<div class="abs" style="left:58px;top:61px;width:27px;height:2px;background:#555"></div><div class="tov"></div><div class="tn">1</div></div>
<div class="th" style="left:884px;background:#000;"><div class="abs" style="left:71px;top:0;width:71px;height:82px;background:#a64bff"></div>
<div class="abs" style="left:23px;top:10px;color:#fff;font-weight:bold;font-size:12px;letter-spacing:-.8px">Learn</div>
<div class="abs" style="left:96px;top:10px;color:#f0dcff;font-weight:bold;font-size:12px;letter-spacing:-.8px">Play</div>
<div class="abs" style="left:58px;top:5px;width:27px;height:7px;border-radius:4px;background:#b77bff"></div>
<div class="abs" style="left:18px;top:26px;width:36px;height:36px;border:1px solid #5c3c8c;border-radius:3px"></div>
<svg class="abs" style="left:23px;top:37px" width="24" height="15" viewBox="0 0 24 15"><path d="M1 7.5Q12-3 23 7.5 12 18 1 7.5z" fill="#dcc4f6"/><circle cx="12" cy="7.5" r="4" fill="#a64bff"/></svg>
<div class="abs" style="left:89px;top:26px;width:35px;height:35px;border-radius:3px;background:#dcc4f6"></div>
<div class="abs" style="left:83px;top:32px;width:15px;height:16px;border-radius:50%;background:#9b4dff"></div>
<svg class="abs" style="left:92px;top:50px" width="11" height="11" viewBox="0 0 11 11"><path d="M5.5 0v11M0 5.5h11" stroke="#111" stroke-width="2"/><path d="M5.5 0l-2 2h4zM5.5 11l-2-2h4zM0 5.5l2-2v4zM11 5.5l-2-2v4z" fill="#111"/></svg>
<div class="abs" style="left:21px;top:70px;width:34px;height:2px;background:#444"></div><div class="tn">3</div></div>
<div class="th" style="left:1047px;background:linear-gradient(90deg,#d9b4f4,#e8cdf9 50%,#dcb8f6);overflow:hidden"><div class="abs" style="left:17px;top:11px;width:108px;height:57px;border-radius:3px;background:#000"></div>
<div class="abs" style="left:26px;top:28px;color:#fff;font-weight:bold;font-size:12px;line-height:10.5px;letter-spacing:-1px">The<br>homepage</div>
<div class="abs" style="left:83px;top:14px;color:#a259ff;font-weight:bold;font-size:62px;line-height:50px;letter-spacing:-2px">1</div><div class="tov"></div><div class="tn">4</div></div>
<div class="th" style="left:1209px;background:#000;overflow:hidden"><div class="abs" style="left:100px;top:0;width:42px;height:82px;background:#dfc5fe"></div>
<div class="abs" style="left:30px;top:7px;width:42px;height:7px;border:1px solid #aaa;border-radius:4px"></div>
<div class="abs" style="left:10px;top:22px;width:86px;height:50px;background:#f2f2f4;border:1px solid #6a3fc0"></div>
<div class="abs" style="left:26px;top:28px;width:65px;height:15px;background:linear-gradient(90deg,#1aa0d8,#6a45e0)"></div>
<div class="abs" style="left:28px;top:50px;width:8px;height:6px;background:#6b5a50"></div>
<div class="abs" style="left:40px;top:50px;width:8px;height:6px;background:#d9c24a"></div>
<div class="abs" style="left:58px;top:50px;width:6px;height:6px;background:#8bc7b5"></div>
<div class="abs" style="left:75px;top:50px;width:6px;height:6px;background:#e27a8c"></div>
<div class="abs" style="left:117px;top:11px;width:7px;height:7px;border-radius:50%;border:1.5px solid #8b3dff"></div>
<div class="abs" style="left:117px;top:31px;width:7px;height:7px;border-radius:50%;border:1.5px solid #8b3dff"></div>
<div class="abs" style="left:117px;top:50px;width:7px;height:7px;border-radius:50%;border:1.5px solid #8b3dff"></div><div class="tov"></div><div class="tn">5</div></div>
<div class="th" style="left:1371px;background:linear-gradient(90deg,#f6c6cf,#fbd7dd 50%,#f7c8d1);overflow:hidden"><div class="abs" style="left:17px;top:11px;width:108px;height:57px;border-radius:3px;background:#000"></div>
<div class="abs" style="left:26px;top:28px;color:#fff;font-weight:bold;font-size:13px;line-height:11px;letter-spacing:-1px">Edit<br>a design</div>
<div class="abs" style="left:84px;top:14px;color:#f2766b;font-weight:bold;font-size:62px;line-height:50px;letter-spacing:-2px">2</div><div class="tov"></div><div class="tn">6</div></div>
<div class="th" style="left:1533px;background:#000;overflow:hidden"><div class="abs" style="left:71px;top:0;width:71px;height:82px;background:#f58a80"></div>
<div class="abs" style="left:27px;top:5px;width:18px;height:6px;border:1px solid #f58a80;border-radius:3px"></div>
<div class="abs" style="left:98px;top:5px;width:18px;height:6px;border-radius:3px;background:#fbd3d3"></div>
<div class="abs" style="left:12px;top:16px;width:48px;height:1px;background:#fff"></div>
<div class="abs" style="left:83px;top:16px;width:48px;height:1px;background:#fdd"></div>
<div class="abs" style="left:11px;top:22px;width:48px;height:49px;background:#e9eaee;border-top:3px solid #6a5be0"></div>
<div class="abs" style="left:22px;top:32px;width:27px;height:28px;background:linear-gradient(180deg,#cbb3a6,#c07a4c)"></div>
<div class="abs" style="left:82px;top:23px;width:48px;height:47px;background:linear-gradient(180deg,#d2c5bd,#e1b79a 60%,#b86a3b)"></div>
<div class="abs" style="left:93px;top:69px;width:29px;height:7px;border-radius:4px;background:#111"></div><div class="tov"></div><div class="tn">7</div></div>
<div class="th" style="left:1696px;background:linear-gradient(90deg,#8fe6e8,#a9eef0 50%,#93e8ea);overflow:hidden"><div class="abs" style="left:18px;top:11px;width:106px;height:58px;border-radius:3px;background:#000"></div>
<div class="abs" style="left:26px;top:30px;color:#fff;font-weight:bold;font-size:12.5px;line-height:11px;letter-spacing:-1px">Find<br>inspiration</div>
<div class="abs" style="left:84px;top:14px;color:#1ec5d1;font-weight:bold;font-size:62px;line-height:50px;letter-spacing:-2px">3</div><div class="tov"></div><div class="tn">8</div></div>
<div class="th" style="left:1858px;background:#000;overflow:hidden"><div class="abs" style="left:29px;top:5px;width:18px;height:6px;border:1px solid #3aa;border-radius:3px"></div>
<div class="abs" style="left:12px;top:16px;width:48px;height:1px;background:#fff"></div>
<div class="abs" style="left:13px;top:22px;width:47px;height:49px;background:#eceaf0;border-top:3px solid #6a5be0"></div>
<div class="abs" style="left:22px;top:32px;width:28px;height:28px;background:linear-gradient(135deg,#e16fd8,#9b6df2)"></div><div class="tov"></div><div class="tn">9</div></div>
<div class="abs" style="left:722px;top:810px;width:142px;height:89px;border:2px solid #7b7b7b;border-radius:14px;background:#fff"></div>
<div class="th" style="left:727px;top:815px;width:132px;height:80px;border-radius:10px;background:#000;overflow:hidden">
<div class="abs" style="left:35px;top:8px;width:64px;height:13px;border:1px solid #5a3a90;border-radius:7px"></div>
<div class="abs" style="left:43px;top:13px;width:48px;height:3px;background:repeating-linear-gradient(90deg,#ddd 0 3px,#444 3px 4px);opacity:.9"></div>
<div class="abs" style="left:41px;top:35px;width:9px;height:22px;border-radius:2px;background:#dcc4f6"></div>
<div class="abs" style="left:54px;top:35px;width:22px;height:22px;border-radius:2px;background:#a64bff"></div>
<div class="abs" style="left:80px;top:35px;width:22px;height:22px;border-radius:2px;background:#7a2ae6"></div>
<div class="abs" style="left:106px;top:35px;width:22px;height:22px;border-radius:2px;background:#3f1379"></div>
<div class="abs" style="left:57px;top:41px;width:16px;height:1.5px;background:#f0e0ff;opacity:.4;filter:blur(.3px)"></div><div class="abs" style="left:57px;top:45px;width:16px;height:1.5px;background:#f0e0ff;opacity:.4;filter:blur(.3px)"></div><div class="abs" style="left:59px;top:49px;width:12px;height:1.5px;background:#f0e0ff;opacity:.4;filter:blur(.3px)"></div><div class="abs" style="left:83px;top:41px;width:16px;height:1.5px;background:#f0e0ff;opacity:.4;filter:blur(.3px)"></div><div class="abs" style="left:83px;top:45px;width:16px;height:1.5px;background:#f0e0ff;opacity:.4;filter:blur(.3px)"></div><div class="abs" style="left:85px;top:49px;width:12px;height:1.5px;background:#f0e0ff;opacity:.4;filter:blur(.3px)"></div><div class="abs" style="left:109px;top:41px;width:16px;height:1.5px;background:#f0e0ff;opacity:.4;filter:blur(.3px)"></div><div class="abs" style="left:109px;top:45px;width:16px;height:1.5px;background:#f0e0ff;opacity:.4;filter:blur(.3px)"></div><div class="abs" style="left:111px;top:49px;width:12px;height:1.5px;background:#f0e0ff;opacity:.4;filter:blur(.3px)"></div><div class="abs" style="left:44px;top:10px;width:1px;height:62px;background:#333"></div>
<div class="tn" style="left:5px;bottom:2px">2</div>
</div>
<div id="bottom">
<svg class="abs" style="left:19px;top:15px" width="25" height="22" viewBox="0 0 25 22"><path d="M1 2h15M1 8h11M1 14h6M1 20h4" stroke="#0d1216" stroke-width="1.8" stroke-linecap="round"/><path d="M9 20l1-4.5L20 5.5a2 2 0 0 1 3 3L13 18.5z" fill="none" stroke="#0d1216" stroke-width="1.8" stroke-linejoin="round"/></svg>
<div class="bt" style="left:51px">Notes</div>
<svg class="abs" style="left:128px;top:16px" width="26" height="19" viewBox="0 0 26 19"><rect x="1" y="1" width="24" height="17" rx="2" fill="none" stroke="#0d1216" stroke-width="1.8"/><path d="M11 6v7l5.5-3.5z" fill="#0d1216"/></svg>
<div class="bt" style="left:161px">Duration</div>
<svg class="abs" style="left:264px;top:13px" width="22" height="24" viewBox="0 0 22 24"><circle cx="11" cy="13.5" r="9" fill="none" stroke="#0d1216" stroke-width="1.8"/><path d="M7 1.5h8M11 2v3M11 9v5l3 2" fill="none" stroke="#0d1216" stroke-width="1.8" stroke-linecap="round"/></svg>
<div class="bt" style="left:296px">Timer</div>
<div class="bt" style="left:750px;font-size:17.5px;top:16px">Page 2 / 27</div>
<div class="abs" style="left:858px;top:12px;width:1px;height:27px;background:#e0e1e4"></div>
<div class="abs" style="left:879px;top:24px;width:250px;height:3px;border-radius:2px;background:#dcdcdc"></div>
<div class="abs" style="left:879px;top:24px;width:92px;height:3px;border-radius:2px;background:#8d8d8f"></div>
<div class="abs" style="left:963px;top:17px;width:17px;height:17px;border-radius:50%;background:#111"></div>
<div class="bt" style="left:1162px;font-size:17.5px;top:16px">43%</div>
<svg class="abs" style="left:1239px;top:15px" width="22" height="21" viewBox="0 0 22 21"><rect x="1" y="1" width="8" height="8" rx="2" fill="none" stroke="#0d1216" stroke-width="1.8"/><rect x="13" y="1" width="8" height="8" rx="2" fill="none" stroke="#0d1216" stroke-width="1.8"/><rect x="1" y="12" width="8" height="8" rx="2" fill="none" stroke="#0d1216" stroke-width="1.8"/><rect x="13" y="12" width="8" height="8" rx="2" fill="none" stroke="#0d1216" stroke-width="1.8"/></svg>
<svg class="abs" style="left:1289px;top:15px" width="22" height="22" viewBox="0 0 22 22"><path d="M13 2h7v7M20 2l-7 7M9 20H2v-7M2 20l7-7" fill="none" stroke="#0d1216" stroke-width="1.8" stroke-linecap="round" stroke-linejoin="round"/></svg>
<svg class="abs" style="left:1337px;top:13px" width="26" height="26" viewBox="0 0 26 26"><circle cx="13" cy="13" r="11.5" fill="none" stroke="#0d1216" stroke-width="1.8"/><path d="M9.5 10a3.5 3.5 0 1 1 5 3.2c-1 .5-1.5 1.2-1.5 2.3v.5" fill="none" stroke="#0d1216" stroke-width="1.8" stroke-linecap="round"/><circle cx="13" cy="19.3" r="1.2" fill="#0d1216"/></svg>
</div>
</body></html>
